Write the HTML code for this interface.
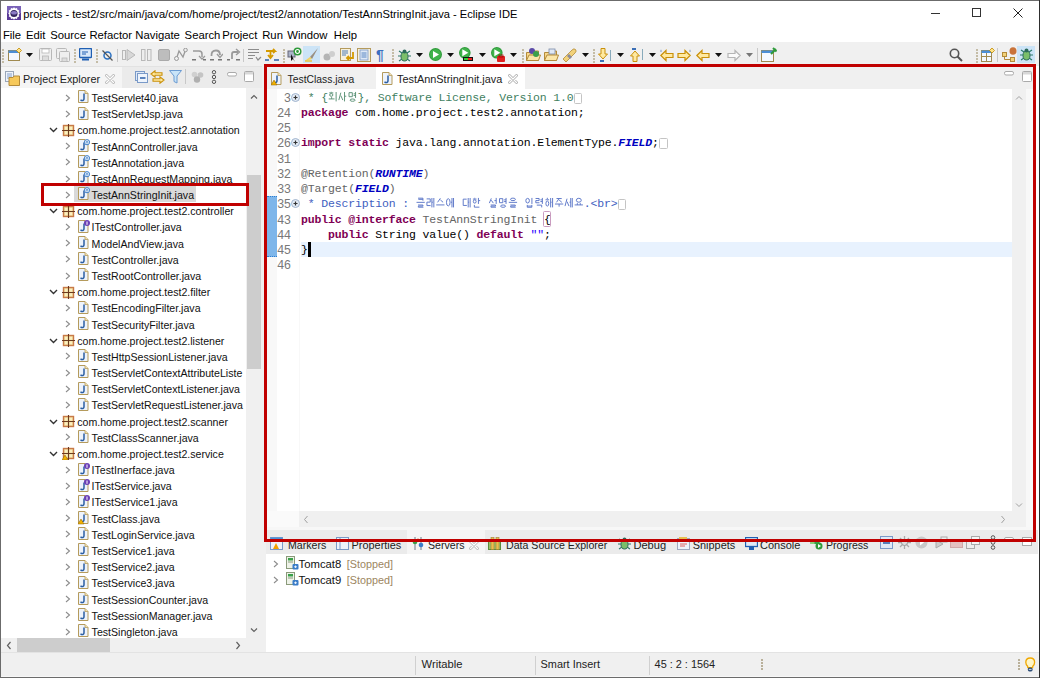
<!DOCTYPE html>
<html><head><meta charset="utf-8"><title>Eclipse IDE</title>
<style>
html,body{margin:0;padding:0;width:1040px;height:678px;overflow:hidden;background:#6b6b6b}
body>div{position:absolute}
.t{position:absolute;white-space:pre}
</style></head><body>
<div style="left:0;top:0;width:1040px;height:678px;background:#6b6b6b"></div>
<div style="left:1039px;top:0px;width:1px;height:678px;background:#2e2e2e;"></div>
<div style="left:1px;top:1px;width:1038px;height:676px;background:#ffffff;"></div>
<svg style="position:absolute;left:7px;top:6px" width="14" height="14" viewBox="0 0 14 14"><rect x="0" y="0" width="14" height="14" fill="#5b3a98"/><rect x="0" y="0" width="14" height="7" fill="#7a62b8"/><path d="M7 1.2 L8.2 2.6 L10 2 L10.4 3.8 L12.2 4.4 L11.6 6.2 L12.8 7.5 L11.6 8.8 L12.2 10.6 L10.4 11.2 L10 13 L8.2 12.4 L7 13.8 L5.8 12.4 L4 13 L3.6 11.2 L1.8 10.6 L2.4 8.8 L1.2 7.5 L2.4 6.2 L1.8 4.4 L3.6 3.8 L4 2 L5.8 2.6 Z" fill="#fff"/><circle cx="7" cy="7.5" r="3.6" fill="#35275f"/><ellipse cx="7" cy="6.8" rx="3" ry="1.8" fill="#8b7bc5"/></svg>
<div class="t" style="left:23.3px;top:4.00px;font-family:'Liberation Sans', sans-serif;font-size:11.15px;line-height:20px;color:#000;">projects - test2/src/main/java/com/home/project/test2/annotation/TestAnnStringInit.java - Eclipse IDE</div>
<div style="left:931px;top:12.5px;width:9px;height:1px;background:#333;"></div>
<div style="left:972px;top:8px;width:9px;height:9px;background:transparent;border:1px solid #333;box-sizing:border-box"></div>
<svg style="position:absolute;left:1013px;top:8px" width="10" height="10" viewBox="0 0 10 10"><path d="M0.5 0.5 L9.5 9.5 M9.5 0.5 L0.5 9.5" stroke="#222" stroke-width="1"/></svg>
<div class="t" style="left:2.9px;top:25.00px;font-family:'Liberation Sans', sans-serif;font-size:11.3px;line-height:20px;color:#000;">File</div>
<div class="t" style="left:25.900000000000002px;top:25.00px;font-family:'Liberation Sans', sans-serif;font-size:11.3px;line-height:20px;color:#000;">Edit</div>
<div class="t" style="left:50.2px;top:25.00px;font-family:'Liberation Sans', sans-serif;font-size:11.3px;line-height:20px;color:#000;">Source</div>
<div class="t" style="left:89.39999999999999px;top:25.00px;font-family:'Liberation Sans', sans-serif;font-size:11.3px;line-height:20px;color:#000;">Refactor</div>
<div class="t" style="left:135.29999999999998px;top:25.00px;font-family:'Liberation Sans', sans-serif;font-size:11.3px;line-height:20px;color:#000;">Navigate</div>
<div class="t" style="left:184.6px;top:25.00px;font-family:'Liberation Sans', sans-serif;font-size:11.3px;line-height:20px;color:#000;">Search</div>
<div class="t" style="left:222.2px;top:25.00px;font-family:'Liberation Sans', sans-serif;font-size:11.3px;line-height:20px;color:#000;">Project</div>
<div class="t" style="left:262.20000000000005px;top:25.00px;font-family:'Liberation Sans', sans-serif;font-size:11.3px;line-height:20px;color:#000;">Run</div>
<div class="t" style="left:287.3px;top:25.00px;font-family:'Liberation Sans', sans-serif;font-size:11.3px;line-height:20px;color:#000;">Window</div>
<div class="t" style="left:333.8px;top:25.00px;font-family:'Liberation Sans', sans-serif;font-size:11.3px;line-height:20px;color:#000;">Help</div>
<div style="left:1px;top:42px;width:1038px;height:24px;background:#f0f0f0;"></div>
<div style="left:1px;top:66px;width:263px;height:1px;background:#e2e2e2;"></div>
<svg style="position:absolute;left:2px;top:49px" width="2" height="14" viewBox="0 0 2 14"><rect x="0" y="0" width="2" height="2" fill="#c4bca6"/><rect x="0" y="3" width="2" height="2" fill="#c4bca6"/><rect x="0" y="6" width="2" height="2" fill="#c4bca6"/><rect x="0" y="9" width="2" height="2" fill="#c4bca6"/><rect x="0" y="12" width="2" height="2" fill="#c4bca6"/></svg>
<svg style="position:absolute;left:8px;top:48px" width="15" height="13" viewBox="0 0 15 13"><rect x="0.5" y="2.5" width="11" height="10" fill="#f5f9ff" stroke="#a08a50"/><rect x="0.5" y="2.5" width="11" height="2.5" fill="#4d8fd6"/><path d="M11 0 L13.5 2.5 L11 5 L8.5 2.5 Z" fill="#ffe38a" stroke="#c08a00" stroke-width="0.8"/></svg>
<svg style="position:absolute;left:26px;top:53px" width="7" height="4" viewBox="0 0 7 4"><path d="M0 0 H7 L3.5 4 Z" fill="#111"/></svg>
<svg style="position:absolute;left:39px;top:48px" width="13" height="13" viewBox="0 0 13 13"><rect x="0.5" y="0.5" width="12" height="12" rx="1" fill="#efefef" stroke="#b8b8b8"/><rect x="3" y="1" width="7" height="4" fill="#fff" stroke="#b8b8b8" stroke-width="0.8"/><rect x="3.5" y="8" width="6" height="4.5" fill="#ddd" stroke="#b8b8b8" stroke-width="0.8"/></svg>
<svg style="position:absolute;left:56px;top:48px" width="14" height="14" viewBox="0 0 14 14"><rect x="0.5" y="0.5" width="10" height="10" rx="1" fill="#efefef" stroke="#b8b8b8"/><rect x="3.5" y="3.5" width="10" height="10" rx="1" fill="#efefef" stroke="#b8b8b8"/><rect x="6" y="10" width="5" height="3.5" fill="#ddd" stroke="#b8b8b8" stroke-width="0.8"/></svg>
<svg style="position:absolute;left:74px;top:49px" width="2" height="14" viewBox="0 0 2 14"><rect x="0" y="0" width="2" height="2" fill="#c4bca6"/><rect x="0" y="3" width="2" height="2" fill="#c4bca6"/><rect x="0" y="6" width="2" height="2" fill="#c4bca6"/><rect x="0" y="9" width="2" height="2" fill="#c4bca6"/><rect x="0" y="12" width="2" height="2" fill="#c4bca6"/></svg>
<svg style="position:absolute;left:79px;top:48px" width="13" height="13" viewBox="0 0 13 13"><rect x="0.5" y="0.5" width="12" height="9" rx="1" fill="#d9e8fa" stroke="#1f5fb3" stroke-width="1.4"/><path d="M3 4 H9 M3 6 H7" stroke="#1f5fb3"/><rect x="3" y="10.5" width="7" height="2" fill="#1f5fb3"/></svg>
<svg style="position:absolute;left:96px;top:49px" width="2" height="14" viewBox="0 0 2 14"><rect x="0" y="0" width="2" height="2" fill="#c4bca6"/><rect x="0" y="3" width="2" height="2" fill="#c4bca6"/><rect x="0" y="6" width="2" height="2" fill="#c4bca6"/><rect x="0" y="9" width="2" height="2" fill="#c4bca6"/><rect x="0" y="12" width="2" height="2" fill="#c4bca6"/></svg>
<svg style="position:absolute;left:102px;top:50px" width="11" height="11" viewBox="0 0 11 11"><circle cx="5.5" cy="5.5" r="3.5" fill="none" stroke="#2a6fc0" stroke-width="1.5"/><path d="M0.5 0.5 L10.5 10.5" stroke="#555" stroke-width="1.2"/></svg>
<div style="left:117px;top:49px;width:1px;height:13px;background:#c8c8c8;"></div>
<svg style="position:absolute;left:122px;top:49px" width="14" height="12" viewBox="0 0 14 12"><rect x="0.5" y="1.5" width="3" height="9" fill="#eee" stroke="#b8b8b8"/><path d="M5 0.5 L13 6 L5 11.5 Z" fill="#d8d8d8" stroke="#b8b8b8"/></svg>
<svg style="position:absolute;left:141px;top:49px" width="11" height="12" viewBox="0 0 11 12"><rect x="0.5" y="0.5" width="3.5" height="11" fill="#eee" stroke="#b8b8b8"/><rect x="6.5" y="0.5" width="3.5" height="11" fill="#eee" stroke="#b8b8b8"/></svg>
<svg style="position:absolute;left:158px;top:49px" width="12" height="12" viewBox="0 0 12 12"><rect x="0.5" y="0.5" width="11" height="11" rx="1.5" fill="#bdbdbd" stroke="#aaa"/></svg>
<svg style="position:absolute;left:174px;top:48px" width="14" height="13" viewBox="0 0 14 13"><path d="M2.5 10.5 L5 3 L9 9 L11.5 2" fill="none" stroke="#999" stroke-width="1.3"/><circle cx="2.5" cy="10.5" r="2" fill="#eee" stroke="#999"/><circle cx="11.5" cy="2" r="1.8" fill="#eee" stroke="#999"/></svg>
<svg style="position:absolute;left:192px;top:48px" width="14" height="13" viewBox="0 0 14 13"><path d="M1 3 H7 Q10 3 10 6 V9" fill="none" stroke="#9a9a9a" stroke-width="1.5"/><path d="M7 8 L10 11 L13 8" fill="none" stroke="#9a9a9a" stroke-width="1.3"/><rect x="0" y="11" width="4" height="1.5" fill="#777"/><rect x="11" y="11" width="3" height="1.5" fill="#777"/></svg>
<svg style="position:absolute;left:209px;top:48px" width="14" height="13" viewBox="0 0 14 13"><path d="M2.5 8 Q2 2.5 7 2.5 Q11 2.5 11 7" fill="none" stroke="#9a9a9a" stroke-width="1.8"/><path d="M8 6 L11 9.5 L14 6" fill="none" stroke="#9a9a9a" stroke-width="1.4"/><rect x="1" y="11" width="4" height="1.5" fill="#777"/><rect x="9" y="11" width="4" height="1.5" fill="#777"/></svg>
<svg style="position:absolute;left:227px;top:48px" width="14" height="13" viewBox="0 0 14 13"><path d="M5 11 V6 Q5 4 7 4 H11" fill="none" stroke="#9a9a9a" stroke-width="1.8"/><path d="M9 1 L12.5 4 L9 7" fill="none" stroke="#9a9a9a" stroke-width="1.4"/><rect x="0" y="11" width="3" height="1.5" fill="#777"/><rect x="9" y="11" width="4" height="1.5" fill="#777"/></svg>
<div style="left:243px;top:49px;width:1px;height:13px;background:#c8c8c8;"></div>
<svg style="position:absolute;left:248px;top:48px" width="14" height="13" viewBox="0 0 14 13"><path d="M0 1.5 H11 M0 4.5 H11 M0 7.5 H7 M0 10.5 H5" stroke="#8c8c8c" stroke-width="1.2"/><path d="M8 9 L10 12 L13 9" fill="none" stroke="#8c8c8c" stroke-width="1.2"/></svg>
<svg style="position:absolute;left:265px;top:48px" width="15" height="13" viewBox="0 0 15 13"><path d="M1 3 H10 L8 1 M10 3 L8 5" fill="none" stroke="#d49a00" stroke-width="1.8"/><path d="M5.5 3 V9 M3 7 L5.5 10 L8 7" fill="none" stroke="#d49a00" stroke-width="1.8"/><path d="M0 12 H4 M9 12 H14" stroke="#2a5ea8" stroke-width="1.5"/></svg>
<svg style="position:absolute;left:283px;top:49px" width="2" height="14" viewBox="0 0 2 14"><rect x="0" y="0" width="2" height="2" fill="#c4bca6"/><rect x="0" y="3" width="2" height="2" fill="#c4bca6"/><rect x="0" y="6" width="2" height="2" fill="#c4bca6"/><rect x="0" y="9" width="2" height="2" fill="#c4bca6"/><rect x="0" y="12" width="2" height="2" fill="#c4bca6"/></svg>
<svg style="position:absolute;left:287px;top:47px" width="15" height="15" viewBox="0 0 15 15"><rect x="1" y="4" width="7" height="6" fill="#aab3c8" stroke="#667"/><path d="M4 7 L4 14 L6 12 L8 15 Z" fill="#111"/><circle cx="10.5" cy="4.5" r="4" fill="#2e9a3a"/><circle cx="10.5" cy="4.5" r="2" fill="none" stroke="#fff" stroke-width="1.2"/></svg>
<div style="left:303px;top:46px;width:17px;height:17px;background:#cce4f7;"></div>
<svg style="position:absolute;left:304px;top:47px" width="15" height="15" viewBox="0 0 15 15"><path d="M14 1 L6 10 L8 12 Z" fill="#9a8f82"/><path d="M6 10 L2 13 L1 14 L8 12 Z" fill="#f4d35e"/><path d="M1 14 H8" stroke="#e8c440" stroke-width="1.5"/></svg>
<svg style="position:absolute;left:323px;top:50px" width="13" height="11" viewBox="0 0 13 11"><circle cx="4" cy="7" r="3.5" fill="#b5b5b5"/><circle cx="9" cy="4" r="3" fill="#cfcfcf"/></svg>
<svg style="position:absolute;left:340px;top:48px" width="15" height="14" viewBox="0 0 15 14"><rect x="0.5" y="0.5" width="10" height="12" fill="#f6f0dc" stroke="#b59b5c"/><path d="M2 3 H8 M2 5 H8 M2 7 H6" stroke="#3b6fb6" stroke-width="0.9"/><path d="M13 4 V10 H7 M9 8 L7 10 L9 12" fill="none" stroke="#d49a00" stroke-width="1.8"/></svg>
<svg style="position:absolute;left:357px;top:48px" width="14" height="14" viewBox="0 0 14 14"><rect x="0.5" y="0.5" width="13" height="13" fill="#f6f0dc" stroke="#b59b5c"/><rect x="3" y="2" width="8" height="10" fill="#dde8f6" stroke="#7a9ac8" stroke-width="0.8"/><path d="M4.5 5 H9.5 M4.5 7 H9.5 M4.5 9 H9.5" stroke="#3b6fb6" stroke-width="0.8"/></svg>
<div class="t" style="left:376px;top:45.00px;font-family:'Liberation Sans', sans-serif;font-size:14px;line-height:20px;color:#3b6fc0;font-weight:bold">¶</div>
<svg style="position:absolute;left:392px;top:49px" width="2" height="14" viewBox="0 0 2 14"><rect x="0" y="0" width="2" height="2" fill="#c4bca6"/><rect x="0" y="3" width="2" height="2" fill="#c4bca6"/><rect x="0" y="6" width="2" height="2" fill="#c4bca6"/><rect x="0" y="9" width="2" height="2" fill="#c4bca6"/><rect x="0" y="12" width="2" height="2" fill="#c4bca6"/></svg>
<svg style="position:absolute;left:397px;top:48px" width="15" height="15" viewBox="0 0 15 15"><path d="M2 3 L5 5 M13 3 L10 5 M1 8 H4 M14 8 H11 M2 13 L5 11 M13 13 L10 11" stroke="#2c7a6a" stroke-width="1.2"/><ellipse cx="7.5" cy="8.5" rx="3.5" ry="4.5" fill="#7bbf6a" stroke="#2c6a5a"/><circle cx="7.5" cy="3.5" r="2" fill="#2c6a5a"/></svg>
<svg style="position:absolute;left:416px;top:53px" width="7" height="4" viewBox="0 0 7 4"><path d="M0 0 H7 L3.5 4 Z" fill="#111"/></svg>
<svg style="position:absolute;left:429px;top:48px" width="14" height="14" viewBox="0 0 14 14"><circle cx="6.5" cy="6.5" r="6.5" fill="#2e9a3a"/><circle cx="6.5" cy="6.5" r="5.5" fill="#3fb24a"/><path d="M4.0 3.0 L10.0 6.5 L4.0 10.0 Z" fill="#fff"/></svg>
<svg style="position:absolute;left:447px;top:53px" width="7" height="4" viewBox="0 0 7 4"><path d="M0 0 H7 L3.5 4 Z" fill="#111"/></svg>
<svg style="position:absolute;left:459px;top:47px" width="15" height="16" viewBox="0 0 15 16"><circle cx="5.8" cy="5.8" r="5.8" fill="#2e9a3a"/><circle cx="5.8" cy="5.8" r="4.8" fill="#3fb24a"/><path d="M3.3 2.3 L9.3 5.8 L3.3 9.3 Z" fill="#fff"/><rect x="4" y="10" width="10" height="4" fill="#111"/><rect x="5" y="11" width="4" height="2" fill="#3c3"/><rect x="9" y="11" width="4" height="2" fill="#e22"/></svg>
<svg style="position:absolute;left:479px;top:53px" width="7" height="4" viewBox="0 0 7 4"><path d="M0 0 H7 L3.5 4 Z" fill="#111"/></svg>
<svg style="position:absolute;left:491px;top:47px" width="15" height="16" viewBox="0 0 15 16"><circle cx="5.8" cy="5.8" r="5.8" fill="#2e9a3a"/><circle cx="5.8" cy="5.8" r="4.8" fill="#3fb24a"/><path d="M3.3 2.3 L9.3 5.8 L3.3 9.3 Z" fill="#fff"/><rect x="6" y="9" width="8" height="6" rx="1" fill="#e02020"/><rect x="8" y="8" width="4" height="2" fill="none" stroke="#a00" stroke-width="0.8"/></svg>
<svg style="position:absolute;left:510px;top:53px" width="7" height="4" viewBox="0 0 7 4"><path d="M0 0 H7 L3.5 4 Z" fill="#111"/></svg>
<svg style="position:absolute;left:522px;top:49px" width="2" height="14" viewBox="0 0 2 14"><rect x="0" y="0" width="2" height="2" fill="#c4bca6"/><rect x="0" y="3" width="2" height="2" fill="#c4bca6"/><rect x="0" y="6" width="2" height="2" fill="#c4bca6"/><rect x="0" y="9" width="2" height="2" fill="#c4bca6"/><rect x="0" y="12" width="2" height="2" fill="#c4bca6"/></svg>
<svg style="position:absolute;left:526px;top:48px" width="15" height="14" viewBox="0 0 15 14"><path d="M0.5 4.5 H5 L6 3 H12.5 V12.5 H0.5 Z" fill="#f6d68a" stroke="#b38a3a"/><path d="M0.5 12.5 L3 7 H14.5 L12.5 12.5 Z" fill="#fbe6a8" stroke="#b38a3a"/><circle cx="6" cy="3" r="3" fill="#5b4aa8"/><circle cx="10" cy="6" r="3" fill="#3aa04a"/></svg>
<svg style="position:absolute;left:544px;top:48px" width="15" height="14" viewBox="0 0 15 14"><path d="M0.5 4.5 H5 L6 3 H12.5 V12.5 H0.5 Z" fill="#f6d68a" stroke="#b38a3a"/><path d="M0.5 12.5 L3 7 H14.5 L12.5 12.5 Z" fill="#fbe6a8" stroke="#b38a3a"/><rect x="5" y="1" width="6" height="5" fill="#dfe8f5" stroke="#7a8aa8" stroke-width="0.8"/></svg>
<svg style="position:absolute;left:562px;top:48px" width="15" height="14" viewBox="0 0 15 14"><path d="M3 13 L1 11 L10 2 Q12 0 13.5 1.5 Q15 3 13 5 L4 14 Z" fill="#f2d27a" stroke="#b38a3a" stroke-width="0.8"/><path d="M5 8 L8 11 L10 9 L7 6 Z" fill="#8a8a9a"/></svg>
<svg style="position:absolute;left:582px;top:53px" width="7" height="4" viewBox="0 0 7 4"><path d="M0 0 H7 L3.5 4 Z" fill="#111"/></svg>
<svg style="position:absolute;left:593px;top:49px" width="2" height="14" viewBox="0 0 2 14"><rect x="0" y="0" width="2" height="2" fill="#c4bca6"/><rect x="0" y="3" width="2" height="2" fill="#c4bca6"/><rect x="0" y="6" width="2" height="2" fill="#c4bca6"/><rect x="0" y="9" width="2" height="2" fill="#c4bca6"/><rect x="0" y="12" width="2" height="2" fill="#c4bca6"/></svg>
<svg style="position:absolute;left:598px;top:48px" width="14" height="14" viewBox="0 0 14 14"><path d="M3 0.5 H7 V6 H9.5 L5 11 L0.5 6 H3 Z" fill="#ffe9a0" stroke="#c9900a"/><path d="M12.5 2 V13" stroke="#8ab" stroke-width="1"/><rect x="2" y="12" width="4" height="2" fill="#3b6fb6"/></svg>
<svg style="position:absolute;left:617px;top:53px" width="7" height="4" viewBox="0 0 7 4"><path d="M0 0 H7 L3.5 4 Z" fill="#111"/></svg>
<svg style="position:absolute;left:630px;top:48px" width="14" height="14" viewBox="0 0 14 14"><path d="M3 13.5 H7 V8 H9.5 L5 3 L0.5 8 H3 Z" fill="#ffe9a0" stroke="#c9900a"/><path d="M12.5 1 V12" stroke="#8ab" stroke-width="1"/><rect x="2" y="0" width="4" height="2" fill="#3b6fb6"/></svg>
<svg style="position:absolute;left:649px;top:53px" width="7" height="4" viewBox="0 0 7 4"><path d="M0 0 H7 L3.5 4 Z" fill="#111"/></svg>
<svg style="position:absolute;left:660px;top:49px" width="14" height="13" viewBox="0 0 14 13"><path d="M0.8 6.5 L6 1.5 V4.5 H13 V8.5 H6 V11.5 Z" fill="#ffe9a0" stroke="#c9900a" stroke-width="1.2"/><path d="M1 0.5 L2 2.5 L0 2.5 Z M1 3 L2 1 L0 1 Z" fill="#2a5ea8"/></svg>
<svg style="position:absolute;left:677px;top:49px" width="14" height="13" viewBox="0 0 14 13"><g transform="translate(14,0) scale(-1,1)"><path d="M0.8 6.5 L6 1.5 V4.5 H13 V8.5 H6 V11.5 Z" fill="#ffe9a0" stroke="#c9900a" stroke-width="1.2"/></g><path d="M13 0.5 L14 2.5 L12 2.5 Z M13 3 L14 1 L12 1 Z" fill="#2a5ea8"/></svg>
<svg style="position:absolute;left:696px;top:49px" width="14" height="13" viewBox="0 0 14 13"><path d="M0.8 6.5 L6 1.5 V4.5 H13 V8.5 H6 V11.5 Z" fill="#ffe9a0" stroke="#c9900a" stroke-width="1.2"/></svg>
<svg style="position:absolute;left:715px;top:53px" width="7" height="4" viewBox="0 0 7 4"><path d="M0 0 H7 L3.5 4 Z" fill="#111"/></svg>
<svg style="position:absolute;left:727px;top:49px" width="14" height="13" viewBox="0 0 14 13"><g transform="translate(14,0) scale(-1,1)"><path d="M0.8 6.5 L6 1.5 V4.5 H13 V8.5 H6 V11.5 Z" fill="#fafafa" stroke="#b5b5b5" stroke-width="1.2"/></g></svg>
<svg style="position:absolute;left:746px;top:53px" width="7" height="4" viewBox="0 0 7 4"><path d="M0 0 H7 L3.5 4 Z" fill="#777"/></svg>
<div style="left:757px;top:48px;width:1px;height:14px;background:#c8c8c8;"></div>
<svg style="position:absolute;left:761px;top:47px" width="16" height="15" viewBox="0 0 16 15"><rect x="0.5" y="3.5" width="12" height="11" fill="#f5f9ff" stroke="#a08a50"/><rect x="0.5" y="3.5" width="12" height="2.5" fill="#4d8fd6"/><path d="M10 7 L15 2 M12 1 L15.5 4.5" stroke="#2e9a3a" stroke-width="2"/></svg>
<svg style="position:absolute;left:949px;top:48px" width="14" height="15" viewBox="0 0 14 15"><circle cx="5.5" cy="5.5" r="4.2" fill="none" stroke="#555" stroke-width="1.6"/><path d="M8.5 8.5 L13 13" stroke="#555" stroke-width="2"/></svg>
<svg style="position:absolute;left:976px;top:49px" width="2" height="14" viewBox="0 0 2 14"><rect x="0" y="0" width="2" height="2" fill="#c4bca6"/><rect x="0" y="3" width="2" height="2" fill="#c4bca6"/><rect x="0" y="6" width="2" height="2" fill="#c4bca6"/><rect x="0" y="9" width="2" height="2" fill="#c4bca6"/><rect x="0" y="12" width="2" height="2" fill="#c4bca6"/></svg>
<svg style="position:absolute;left:981px;top:48px" width="14" height="14" viewBox="0 0 14 14"><rect x="0.5" y="2.5" width="10" height="11" fill="#f5f9ff" stroke="#a08a50"/><rect x="0.5" y="2.5" width="10" height="2.5" fill="#4d8fd6"/><path d="M0.5 8.5 H10.5 M5.5 5 V13.5" stroke="#a08a50"/><path d="M11 0 L13.5 2.5 L11 5 L8.5 2.5 Z" fill="#ffe38a" stroke="#c08a00" stroke-width="0.8"/></svg>
<div style="left:997px;top:48px;width:1px;height:14px;background:#c8c8c8;"></div>
<svg style="position:absolute;left:1002px;top:47px" width="15" height="15" viewBox="0 0 15 15"><rect x="0.5" y="5.5" width="4" height="4" fill="#f2d27a" stroke="#b38a3a"/><rect x="8.5" y="10.5" width="4" height="4" fill="#f2d27a" stroke="#b38a3a"/><path d="M2.5 9.5 V12.5 H8.5" stroke="#b38a3a" fill="none"/><ellipse cx="11" cy="4" rx="3.5" ry="3.8" fill="#c9733a"/></svg>
<div style="left:1017px;top:46px;width:18px;height:17px;background:#cce4f7;"></div>
<svg style="position:absolute;left:1019px;top:47px" width="15" height="15" viewBox="0 0 15 15"><path d="M2 3 L5 5 M13 3 L10 5 M1 8 H4 M14 8 H11 M2 13 L5 11 M13 13 L10 11" stroke="#2c7a6a" stroke-width="1.2"/><ellipse cx="7.5" cy="8.5" rx="3.5" ry="4.5" fill="#7bbf6a" stroke="#2c6a5a"/><circle cx="7.5" cy="3.5" r="2" fill="#2c6a5a"/></svg>
<div style="left:1px;top:67px;width:261px;height:21px;background:#ebebeb;"></div>
<div style="left:1px;top:67px;width:121px;height:21px;background:#f5f5f5;"></div>
<svg style="position:absolute;left:5px;top:71px" width="15" height="15" viewBox="0 0 15 15"><rect x="0.5" y="0.5" width="8" height="10" fill="#eef3fb" stroke="#9aa6b8"/><path d="M2 3 H7 M2 5 H7 M2 7 H6" stroke="#6a8ac0" stroke-width="0.8"/><path d="M4 6.5 H8 L9 5 H14.5 V14.5 H4 Z" fill="#f6c85a" stroke="#b38a3a"/></svg>
<div class="t" style="left:22.9px;top:69.00px;font-family:'Liberation Sans', sans-serif;font-size:10.85px;line-height:20px;color:#222;">Project Explorer</div>
<svg style="position:absolute;left:105px;top:74px" width="10" height="10" viewBox="0 0 10 10"><path d="M1.5 1.5 L8.5 8.5 M8.5 1.5 L1.5 8.5" stroke="#b8b8b8" stroke-width="2.8" stroke-linecap="round"/><path d="M1.5 1.5 L8.5 8.5 M8.5 1.5 L1.5 8.5" stroke="#fff" stroke-width="1.1" stroke-linecap="round"/></svg>
<svg style="position:absolute;left:135px;top:71px" width="13" height="12" viewBox="0 0 13 12"><rect x="0.5" y="0.5" width="9" height="9" fill="#dfe9f7" stroke="#7a9ac8"/><rect x="2.5" y="2.5" width="10" height="9" fill="#eef4fc" stroke="#7a9ac8"/><path d="M5 7 H10.5" stroke="#2a5ea8" stroke-width="1.5"/></svg>
<svg style="position:absolute;left:150px;top:70px" width="15" height="14" viewBox="0 0 15 14"><path d="M1 4 L5 0.8 V2.8 H12 V5.2 H5 V7.2 Z" fill="#ffe9a0" stroke="#c9900a" stroke-width="1.1"/><path d="M14 10 L10 13.2 V11.2 H3 V8.8 H10 V6.8 Z" fill="#ffe9a0" stroke="#c9900a" stroke-width="1.1"/></svg>
<svg style="position:absolute;left:169px;top:70px" width="13" height="14" viewBox="0 0 13 14"><path d="M0.5 0.5 H12.5 L8 6 V13 L5 11.5 V6 Z" fill="#c9e4f8" stroke="#6b9bd2"/></svg>
<div style="left:185px;top:69px;width:1px;height:15px;background:#c8c8c8;"></div>
<svg style="position:absolute;left:191px;top:71px" width="13" height="12" viewBox="0 0 13 12"><circle cx="3.5" cy="3.5" r="2.8" fill="#d0d0d0"/><circle cx="9.5" cy="4" r="2.8" fill="#c4c4c4"/><circle cx="6" cy="8.5" r="3.2" fill="#b0b0b0"/></svg>
<svg style="position:absolute;left:211px;top:70px" width="6" height="14" viewBox="0 0 6 14"><circle cx="3" cy="2.2" r="1.7" fill="none" stroke="#555" stroke-width="1"/><circle cx="3" cy="7" r="1.7" fill="none" stroke="#555" stroke-width="1"/><circle cx="3" cy="11.8" r="1.7" fill="none" stroke="#555" stroke-width="1"/></svg>
<svg style="position:absolute;left:227px;top:72px" width="10" height="5" viewBox="0 0 10 5"><rect x="0.5" y="0.5" width="9" height="3.5" rx="1.5" fill="#fff" stroke="#aaa"/></svg>
<svg style="position:absolute;left:244px;top:71px" width="10" height="11" viewBox="0 0 10 11"><rect x="0.5" y="0.5" width="9" height="10" rx="1" fill="#fff" stroke="#aaa"/><rect x="1" y="1" width="8" height="2.5" fill="#d8d8d8"/></svg>
<div style="left:1px;top:88px;width:245px;height:550px;background:#ffffff;"></div>
<div style="left:246px;top:88px;width:16px;height:550px;background:#f0f0f0;"></div>
<div style="left:246.5px;top:175px;width:14.5px;height:194px;background:#cdcdcd;"></div>
<svg style="position:absolute;left:250px;top:94px" width="8" height="6" viewBox="0 0 8 6"><path d="M1 4.5 L4 1.5 L7 4.5" fill="none" stroke="#606060" stroke-width="1.2"/></svg>
<svg style="position:absolute;left:250px;top:627px" width="8" height="6" viewBox="0 0 8 6"><path d="M1 1.5 L4 4.5 L7 1.5" fill="none" stroke="#606060" stroke-width="1.2"/></svg>
<div style="left:1px;top:638px;width:261px;height:15px;background:#f0f0f0;"></div>
<div style="left:17px;top:638px;width:93px;height:14px;background:#cdcdcd;"></div>
<svg style="position:absolute;left:6px;top:641px" width="6" height="9" viewBox="0 0 6 9"><path d="M4.5 1 L1.5 4.5 L4.5 8" fill="none" stroke="#606060" stroke-width="1.2"/></svg>
<svg style="position:absolute;left:235px;top:641px" width="6" height="9" viewBox="0 0 6 9"><path d="M1.5 1 L4.5 4.5 L1.5 8" fill="none" stroke="#606060" stroke-width="1.2"/></svg>
<div style="left:74px;top:186px;width:122px;height:16px;background:#d9d9d9;"></div>
<svg style="position:absolute;left:64.8px;top:93.6px" width="6" height="8" viewBox="0 0 6 8"><path d="M1 1 L4.5 4 L1 7" fill="none" stroke="#8c8c8c" stroke-width="1.1"/></svg>
<svg style="position:absolute;left:77.6px;top:90.39999999999999px" width="12" height="14" viewBox="0 0 12 14"><path d="M0.5 0.5 H7 L10 3.5 V12.5 H0.5 Z" fill="#eef3fb" stroke="#b59b5c" stroke-width="1"/><path d="M7 0.5 V3.5 H10" fill="#f4e3b0" stroke="#b59b5c" stroke-width="0.8"/><path d="M6 3.5 V8.5 Q6 11 3.5 10.5 L2.5 10" fill="none" stroke="#2b5ea3" stroke-width="1.5"/></svg>
<div class="t" style="left:91.6px;top:88.00px;font-family:'Liberation Sans', sans-serif;font-size:10.6px;line-height:20px;color:#111;">TestServlet40.java</div>
<svg style="position:absolute;left:64.8px;top:109.78px" width="6" height="8" viewBox="0 0 6 8"><path d="M1 1 L4.5 4 L1 7" fill="none" stroke="#8c8c8c" stroke-width="1.1"/></svg>
<svg style="position:absolute;left:77.6px;top:106.58px" width="12" height="14" viewBox="0 0 12 14"><path d="M0.5 0.5 H7 L10 3.5 V12.5 H0.5 Z" fill="#eef3fb" stroke="#b59b5c" stroke-width="1"/><path d="M7 0.5 V3.5 H10" fill="#f4e3b0" stroke="#b59b5c" stroke-width="0.8"/><path d="M6 3.5 V8.5 Q6 11 3.5 10.5 L2.5 10" fill="none" stroke="#2b5ea3" stroke-width="1.5"/></svg>
<div class="t" style="left:91.6px;top:104.00px;font-family:'Liberation Sans', sans-serif;font-size:10.6px;line-height:20px;color:#111;">TestServletJsp.java</div>
<svg style="position:absolute;left:49px;top:127.45999999999998px" width="9" height="6" viewBox="0 0 9 6"><path d="M1 1 L4.5 4.5 L8 1" fill="none" stroke="#333" stroke-width="1.4"/></svg>
<svg style="position:absolute;left:61.8px;top:123.75999999999998px" width="13" height="13" viewBox="0 0 13 13"><rect x="1.5" y="1.5" width="10" height="10" fill="#f3dfa0" stroke="#c87a48" stroke-width="1.4"/><rect x="3" y="3" width="2.6" height="2.6" fill="#fbf0c0"/><rect x="7.4" y="3" width="2.6" height="2.6" fill="#fbf0c0"/><rect x="3" y="7.4" width="2.6" height="2.6" fill="#fbf0c0"/><rect x="7.4" y="7.4" width="2.6" height="2.6" fill="#fbf0c0"/><path d="M6.5 0 V13 M0 6.5 H13" stroke="#6b3a20" stroke-width="1.1"/></svg>
<div class="t" style="left:77.2px;top:120.00px;font-family:'Liberation Sans', sans-serif;font-size:10.6px;line-height:20px;color:#111;">com.home.project.test2.annotation</div>
<svg style="position:absolute;left:64.8px;top:142.14px" width="6" height="8" viewBox="0 0 6 8"><path d="M1 1 L4.5 4 L1 7" fill="none" stroke="#8c8c8c" stroke-width="1.1"/></svg>
<svg style="position:absolute;left:77.6px;top:138.94px" width="12" height="14" viewBox="0 0 12 14"><path d="M0.5 0.5 H7 L10 3.5 V12.5 H0.5 Z" fill="#eef3fb" stroke="#b59b5c" stroke-width="1"/><path d="M7 0.5 V3.5 H10" fill="#f4e3b0" stroke="#b59b5c" stroke-width="0.8"/><path d="M6 3.5 V8.5 Q6 11 3.5 10.5 L2.5 10" fill="none" stroke="#2b5ea3" stroke-width="1.5"/><circle cx="9" cy="3.2" r="2.6" fill="#fff" stroke="#3a7cc8" stroke-width="1"/><circle cx="9" cy="3.2" r="1" fill="none" stroke="#3a7cc8" stroke-width="0.8"/></svg>
<div class="t" style="left:91.6px;top:137.00px;font-family:'Liberation Sans', sans-serif;font-size:10.6px;line-height:20px;color:#111;">TestAnnController.java</div>
<svg style="position:absolute;left:64.8px;top:158.32px" width="6" height="8" viewBox="0 0 6 8"><path d="M1 1 L4.5 4 L1 7" fill="none" stroke="#8c8c8c" stroke-width="1.1"/></svg>
<svg style="position:absolute;left:77.6px;top:155.12px" width="12" height="14" viewBox="0 0 12 14"><path d="M0.5 0.5 H7 L10 3.5 V12.5 H0.5 Z" fill="#eef3fb" stroke="#b59b5c" stroke-width="1"/><path d="M7 0.5 V3.5 H10" fill="#f4e3b0" stroke="#b59b5c" stroke-width="0.8"/><path d="M6 3.5 V8.5 Q6 11 3.5 10.5 L2.5 10" fill="none" stroke="#2b5ea3" stroke-width="1.5"/><circle cx="9" cy="3.2" r="2.6" fill="#fff" stroke="#3a7cc8" stroke-width="1"/><circle cx="9" cy="3.2" r="1" fill="none" stroke="#3a7cc8" stroke-width="0.8"/></svg>
<div class="t" style="left:91.6px;top:153.00px;font-family:'Liberation Sans', sans-serif;font-size:10.6px;line-height:20px;color:#111;">TestAnnotation.java</div>
<svg style="position:absolute;left:64.8px;top:174.5px" width="6" height="8" viewBox="0 0 6 8"><path d="M1 1 L4.5 4 L1 7" fill="none" stroke="#8c8c8c" stroke-width="1.1"/></svg>
<svg style="position:absolute;left:77.6px;top:171.3px" width="12" height="14" viewBox="0 0 12 14"><path d="M0.5 0.5 H7 L10 3.5 V12.5 H0.5 Z" fill="#eef3fb" stroke="#b59b5c" stroke-width="1"/><path d="M7 0.5 V3.5 H10" fill="#f4e3b0" stroke="#b59b5c" stroke-width="0.8"/><path d="M6 3.5 V8.5 Q6 11 3.5 10.5 L2.5 10" fill="none" stroke="#2b5ea3" stroke-width="1.5"/><circle cx="9" cy="3.2" r="2.6" fill="#fff" stroke="#3a7cc8" stroke-width="1"/><circle cx="9" cy="3.2" r="1" fill="none" stroke="#3a7cc8" stroke-width="0.8"/></svg>
<div class="t" style="left:91.6px;top:169.00px;font-family:'Liberation Sans', sans-serif;font-size:10.6px;line-height:20px;color:#111;">TestAnnRequestMapping.java</div>
<svg style="position:absolute;left:64.8px;top:190.68px" width="6" height="8" viewBox="0 0 6 8"><path d="M1 1 L4.5 4 L1 7" fill="none" stroke="#8c8c8c" stroke-width="1.1"/></svg>
<svg style="position:absolute;left:77.6px;top:187.48000000000002px" width="12" height="14" viewBox="0 0 12 14"><path d="M0.5 0.5 H7 L10 3.5 V12.5 H0.5 Z" fill="#eef3fb" stroke="#b59b5c" stroke-width="1"/><path d="M7 0.5 V3.5 H10" fill="#f4e3b0" stroke="#b59b5c" stroke-width="0.8"/><path d="M6 3.5 V8.5 Q6 11 3.5 10.5 L2.5 10" fill="none" stroke="#2b5ea3" stroke-width="1.5"/><circle cx="9" cy="3.2" r="2.6" fill="#fff" stroke="#3a7cc8" stroke-width="1"/><circle cx="9" cy="3.2" r="1" fill="none" stroke="#3a7cc8" stroke-width="0.8"/></svg>
<div class="t" style="left:91.6px;top:185.00px;font-family:'Liberation Sans', sans-serif;font-size:10.6px;line-height:20px;color:#111;">TestAnnStringInit.java</div>
<svg style="position:absolute;left:49px;top:208.35999999999999px" width="9" height="6" viewBox="0 0 9 6"><path d="M1 1 L4.5 4.5 L8 1" fill="none" stroke="#333" stroke-width="1.4"/></svg>
<svg style="position:absolute;left:61.8px;top:204.66px" width="13" height="13" viewBox="0 0 13 13"><rect x="1.5" y="1.5" width="10" height="10" fill="#f3dfa0" stroke="#c87a48" stroke-width="1.4"/><rect x="3" y="3" width="2.6" height="2.6" fill="#fbf0c0"/><rect x="7.4" y="3" width="2.6" height="2.6" fill="#fbf0c0"/><rect x="3" y="7.4" width="2.6" height="2.6" fill="#fbf0c0"/><rect x="7.4" y="7.4" width="2.6" height="2.6" fill="#fbf0c0"/><path d="M6.5 0 V13 M0 6.5 H13" stroke="#6b3a20" stroke-width="1.1"/></svg>
<div class="t" style="left:77.2px;top:201.00px;font-family:'Liberation Sans', sans-serif;font-size:10.6px;line-height:20px;color:#111;">com.home.project.test2.controller</div>
<svg style="position:absolute;left:64.8px;top:223.04px" width="6" height="8" viewBox="0 0 6 8"><path d="M1 1 L4.5 4 L1 7" fill="none" stroke="#8c8c8c" stroke-width="1.1"/></svg>
<svg style="position:absolute;left:77.6px;top:219.84px" width="12" height="14" viewBox="0 0 12 14"><path d="M0.5 0.5 H7 L10 3.5 V12.5 H0.5 Z" fill="#eef3fb" stroke="#b59b5c" stroke-width="1"/><path d="M7 0.5 V3.5 H10" fill="#f4e3b0" stroke="#b59b5c" stroke-width="0.8"/><path d="M6 3.5 V8.5 Q6 11 3.5 10.5 L2.5 10" fill="none" stroke="#2b5ea3" stroke-width="1.5"/><circle cx="9" cy="3" r="3" fill="#6a3fb5"/><path d="M9 1.5 V4.8" stroke="#fff" stroke-width="1"/></svg>
<div class="t" style="left:91.6px;top:217.00px;font-family:'Liberation Sans', sans-serif;font-size:10.6px;line-height:20px;color:#111;">ITestController.java</div>
<svg style="position:absolute;left:64.8px;top:239.22px" width="6" height="8" viewBox="0 0 6 8"><path d="M1 1 L4.5 4 L1 7" fill="none" stroke="#8c8c8c" stroke-width="1.1"/></svg>
<svg style="position:absolute;left:77.6px;top:236.02px" width="12" height="14" viewBox="0 0 12 14"><path d="M0.5 0.5 H7 L10 3.5 V12.5 H0.5 Z" fill="#eef3fb" stroke="#b59b5c" stroke-width="1"/><path d="M7 0.5 V3.5 H10" fill="#f4e3b0" stroke="#b59b5c" stroke-width="0.8"/><path d="M6 3.5 V8.5 Q6 11 3.5 10.5 L2.5 10" fill="none" stroke="#2b5ea3" stroke-width="1.5"/></svg>
<div class="t" style="left:91.6px;top:234.00px;font-family:'Liberation Sans', sans-serif;font-size:10.6px;line-height:20px;color:#111;">ModelAndView.java</div>
<svg style="position:absolute;left:64.8px;top:255.39999999999998px" width="6" height="8" viewBox="0 0 6 8"><path d="M1 1 L4.5 4 L1 7" fill="none" stroke="#8c8c8c" stroke-width="1.1"/></svg>
<svg style="position:absolute;left:77.6px;top:252.2px" width="12" height="14" viewBox="0 0 12 14"><path d="M0.5 0.5 H7 L10 3.5 V12.5 H0.5 Z" fill="#eef3fb" stroke="#b59b5c" stroke-width="1"/><path d="M7 0.5 V3.5 H10" fill="#f4e3b0" stroke="#b59b5c" stroke-width="0.8"/><path d="M6 3.5 V8.5 Q6 11 3.5 10.5 L2.5 10" fill="none" stroke="#2b5ea3" stroke-width="1.5"/></svg>
<div class="t" style="left:91.6px;top:250.00px;font-family:'Liberation Sans', sans-serif;font-size:10.6px;line-height:20px;color:#111;">TestController.java</div>
<svg style="position:absolute;left:64.8px;top:271.58px" width="6" height="8" viewBox="0 0 6 8"><path d="M1 1 L4.5 4 L1 7" fill="none" stroke="#8c8c8c" stroke-width="1.1"/></svg>
<svg style="position:absolute;left:77.6px;top:268.38px" width="12" height="14" viewBox="0 0 12 14"><path d="M0.5 0.5 H7 L10 3.5 V12.5 H0.5 Z" fill="#eef3fb" stroke="#b59b5c" stroke-width="1"/><path d="M7 0.5 V3.5 H10" fill="#f4e3b0" stroke="#b59b5c" stroke-width="0.8"/><path d="M6 3.5 V8.5 Q6 11 3.5 10.5 L2.5 10" fill="none" stroke="#2b5ea3" stroke-width="1.5"/></svg>
<div class="t" style="left:91.6px;top:266.00px;font-family:'Liberation Sans', sans-serif;font-size:10.6px;line-height:20px;color:#111;">TestRootController.java</div>
<svg style="position:absolute;left:49px;top:289.26px" width="9" height="6" viewBox="0 0 9 6"><path d="M1 1 L4.5 4.5 L8 1" fill="none" stroke="#333" stroke-width="1.4"/></svg>
<svg style="position:absolute;left:61.8px;top:285.56px" width="13" height="13" viewBox="0 0 13 13"><rect x="1.5" y="1.5" width="10" height="10" fill="#f3dfa0" stroke="#c87a48" stroke-width="1.4"/><rect x="3" y="3" width="2.6" height="2.6" fill="#fbf0c0"/><rect x="7.4" y="3" width="2.6" height="2.6" fill="#fbf0c0"/><rect x="3" y="7.4" width="2.6" height="2.6" fill="#fbf0c0"/><rect x="7.4" y="7.4" width="2.6" height="2.6" fill="#fbf0c0"/><path d="M6.5 0 V13 M0 6.5 H13" stroke="#6b3a20" stroke-width="1.1"/></svg>
<div class="t" style="left:77.2px;top:282.00px;font-family:'Liberation Sans', sans-serif;font-size:10.6px;line-height:20px;color:#111;">com.home.project.test2.filter</div>
<svg style="position:absolute;left:64.8px;top:303.94px" width="6" height="8" viewBox="0 0 6 8"><path d="M1 1 L4.5 4 L1 7" fill="none" stroke="#8c8c8c" stroke-width="1.1"/></svg>
<svg style="position:absolute;left:77.6px;top:300.74px" width="12" height="14" viewBox="0 0 12 14"><path d="M0.5 0.5 H7 L10 3.5 V12.5 H0.5 Z" fill="#eef3fb" stroke="#b59b5c" stroke-width="1"/><path d="M7 0.5 V3.5 H10" fill="#f4e3b0" stroke="#b59b5c" stroke-width="0.8"/><path d="M6 3.5 V8.5 Q6 11 3.5 10.5 L2.5 10" fill="none" stroke="#2b5ea3" stroke-width="1.5"/></svg>
<div class="t" style="left:91.6px;top:298.00px;font-family:'Liberation Sans', sans-serif;font-size:10.6px;line-height:20px;color:#111;">TestEncodingFilter.java</div>
<svg style="position:absolute;left:64.8px;top:320.12px" width="6" height="8" viewBox="0 0 6 8"><path d="M1 1 L4.5 4 L1 7" fill="none" stroke="#8c8c8c" stroke-width="1.1"/></svg>
<svg style="position:absolute;left:77.6px;top:316.92px" width="12" height="14" viewBox="0 0 12 14"><path d="M0.5 0.5 H7 L10 3.5 V12.5 H0.5 Z" fill="#eef3fb" stroke="#b59b5c" stroke-width="1"/><path d="M7 0.5 V3.5 H10" fill="#f4e3b0" stroke="#b59b5c" stroke-width="0.8"/><path d="M6 3.5 V8.5 Q6 11 3.5 10.5 L2.5 10" fill="none" stroke="#2b5ea3" stroke-width="1.5"/></svg>
<div class="t" style="left:91.6px;top:315.00px;font-family:'Liberation Sans', sans-serif;font-size:10.6px;line-height:20px;color:#111;">TestSecurityFilter.java</div>
<svg style="position:absolute;left:49px;top:337.79999999999995px" width="9" height="6" viewBox="0 0 9 6"><path d="M1 1 L4.5 4.5 L8 1" fill="none" stroke="#333" stroke-width="1.4"/></svg>
<svg style="position:absolute;left:61.8px;top:334.09999999999997px" width="13" height="13" viewBox="0 0 13 13"><rect x="1.5" y="1.5" width="10" height="10" fill="#f3dfa0" stroke="#c87a48" stroke-width="1.4"/><rect x="3" y="3" width="2.6" height="2.6" fill="#fbf0c0"/><rect x="7.4" y="3" width="2.6" height="2.6" fill="#fbf0c0"/><rect x="3" y="7.4" width="2.6" height="2.6" fill="#fbf0c0"/><rect x="7.4" y="7.4" width="2.6" height="2.6" fill="#fbf0c0"/><path d="M6.5 0 V13 M0 6.5 H13" stroke="#6b3a20" stroke-width="1.1"/></svg>
<div class="t" style="left:77.2px;top:331.00px;font-family:'Liberation Sans', sans-serif;font-size:10.6px;line-height:20px;color:#111;">com.home.project.test2.listener</div>
<svg style="position:absolute;left:64.8px;top:352.48px" width="6" height="8" viewBox="0 0 6 8"><path d="M1 1 L4.5 4 L1 7" fill="none" stroke="#8c8c8c" stroke-width="1.1"/></svg>
<svg style="position:absolute;left:77.6px;top:349.28000000000003px" width="12" height="14" viewBox="0 0 12 14"><path d="M0.5 0.5 H7 L10 3.5 V12.5 H0.5 Z" fill="#eef3fb" stroke="#b59b5c" stroke-width="1"/><path d="M7 0.5 V3.5 H10" fill="#f4e3b0" stroke="#b59b5c" stroke-width="0.8"/><path d="M6 3.5 V8.5 Q6 11 3.5 10.5 L2.5 10" fill="none" stroke="#2b5ea3" stroke-width="1.5"/></svg>
<div class="t" style="left:91.6px;top:347.00px;font-family:'Liberation Sans', sans-serif;font-size:10.6px;line-height:20px;color:#111;">TestHttpSessionListener.java</div>
<svg style="position:absolute;left:64.8px;top:368.65999999999997px" width="6" height="8" viewBox="0 0 6 8"><path d="M1 1 L4.5 4 L1 7" fill="none" stroke="#8c8c8c" stroke-width="1.1"/></svg>
<svg style="position:absolute;left:77.6px;top:365.46px" width="12" height="14" viewBox="0 0 12 14"><path d="M0.5 0.5 H7 L10 3.5 V12.5 H0.5 Z" fill="#eef3fb" stroke="#b59b5c" stroke-width="1"/><path d="M7 0.5 V3.5 H10" fill="#f4e3b0" stroke="#b59b5c" stroke-width="0.8"/><path d="M6 3.5 V8.5 Q6 11 3.5 10.5 L2.5 10" fill="none" stroke="#2b5ea3" stroke-width="1.5"/></svg>
<div class="t" style="left:91.6px;top:363.00px;font-family:'Liberation Sans', sans-serif;font-size:10.6px;line-height:20px;color:#111;">TestServletContextAttributeListe</div>
<svg style="position:absolute;left:64.8px;top:384.84000000000003px" width="6" height="8" viewBox="0 0 6 8"><path d="M1 1 L4.5 4 L1 7" fill="none" stroke="#8c8c8c" stroke-width="1.1"/></svg>
<svg style="position:absolute;left:77.6px;top:381.64000000000004px" width="12" height="14" viewBox="0 0 12 14"><path d="M0.5 0.5 H7 L10 3.5 V12.5 H0.5 Z" fill="#eef3fb" stroke="#b59b5c" stroke-width="1"/><path d="M7 0.5 V3.5 H10" fill="#f4e3b0" stroke="#b59b5c" stroke-width="0.8"/><path d="M6 3.5 V8.5 Q6 11 3.5 10.5 L2.5 10" fill="none" stroke="#2b5ea3" stroke-width="1.5"/></svg>
<div class="t" style="left:91.6px;top:379.00px;font-family:'Liberation Sans', sans-serif;font-size:10.6px;line-height:20px;color:#111;">TestServletContextListener.java</div>
<svg style="position:absolute;left:64.8px;top:401.02px" width="6" height="8" viewBox="0 0 6 8"><path d="M1 1 L4.5 4 L1 7" fill="none" stroke="#8c8c8c" stroke-width="1.1"/></svg>
<svg style="position:absolute;left:77.6px;top:397.82px" width="12" height="14" viewBox="0 0 12 14"><path d="M0.5 0.5 H7 L10 3.5 V12.5 H0.5 Z" fill="#eef3fb" stroke="#b59b5c" stroke-width="1"/><path d="M7 0.5 V3.5 H10" fill="#f4e3b0" stroke="#b59b5c" stroke-width="0.8"/><path d="M6 3.5 V8.5 Q6 11 3.5 10.5 L2.5 10" fill="none" stroke="#2b5ea3" stroke-width="1.5"/></svg>
<div class="t" style="left:91.6px;top:395.00px;font-family:'Liberation Sans', sans-serif;font-size:10.6px;line-height:20px;color:#111;">TestServletRequestListener.java</div>
<svg style="position:absolute;left:49px;top:418.70000000000005px" width="9" height="6" viewBox="0 0 9 6"><path d="M1 1 L4.5 4.5 L8 1" fill="none" stroke="#333" stroke-width="1.4"/></svg>
<svg style="position:absolute;left:61.8px;top:415.00000000000006px" width="13" height="13" viewBox="0 0 13 13"><rect x="1.5" y="1.5" width="10" height="10" fill="#f3dfa0" stroke="#c87a48" stroke-width="1.4"/><rect x="3" y="3" width="2.6" height="2.6" fill="#fbf0c0"/><rect x="7.4" y="3" width="2.6" height="2.6" fill="#fbf0c0"/><rect x="3" y="7.4" width="2.6" height="2.6" fill="#fbf0c0"/><rect x="7.4" y="7.4" width="2.6" height="2.6" fill="#fbf0c0"/><path d="M6.5 0 V13 M0 6.5 H13" stroke="#6b3a20" stroke-width="1.1"/></svg>
<div class="t" style="left:77.2px;top:412.00px;font-family:'Liberation Sans', sans-serif;font-size:10.6px;line-height:20px;color:#111;">com.home.project.test2.scanner</div>
<svg style="position:absolute;left:64.8px;top:433.38px" width="6" height="8" viewBox="0 0 6 8"><path d="M1 1 L4.5 4 L1 7" fill="none" stroke="#8c8c8c" stroke-width="1.1"/></svg>
<svg style="position:absolute;left:77.6px;top:430.18px" width="12" height="14" viewBox="0 0 12 14"><path d="M0.5 0.5 H7 L10 3.5 V12.5 H0.5 Z" fill="#eef3fb" stroke="#b59b5c" stroke-width="1"/><path d="M7 0.5 V3.5 H10" fill="#f4e3b0" stroke="#b59b5c" stroke-width="0.8"/><path d="M6 3.5 V8.5 Q6 11 3.5 10.5 L2.5 10" fill="none" stroke="#2b5ea3" stroke-width="1.5"/></svg>
<div class="t" style="left:91.6px;top:428.00px;font-family:'Liberation Sans', sans-serif;font-size:10.6px;line-height:20px;color:#111;">TestClassScanner.java</div>
<svg style="position:absolute;left:49px;top:451.05999999999995px" width="9" height="6" viewBox="0 0 9 6"><path d="M1 1 L4.5 4.5 L8 1" fill="none" stroke="#333" stroke-width="1.4"/></svg>
<svg style="position:absolute;left:61.8px;top:447.35999999999996px" width="13" height="13" viewBox="0 0 13 13"><rect x="1.5" y="1.5" width="10" height="10" fill="#f3dfa0" stroke="#c87a48" stroke-width="1.4"/><rect x="3" y="3" width="2.6" height="2.6" fill="#fbf0c0"/><rect x="7.4" y="3" width="2.6" height="2.6" fill="#fbf0c0"/><rect x="3" y="7.4" width="2.6" height="2.6" fill="#fbf0c0"/><rect x="7.4" y="7.4" width="2.6" height="2.6" fill="#fbf0c0"/><path d="M6.5 0 V13 M0 6.5 H13" stroke="#6b3a20" stroke-width="1.1"/><path d="M0 13 L3 8 L6 13 Z" fill="#f2b100" stroke="#8a6000" stroke-width="0.5"/></svg>
<div class="t" style="left:77.2px;top:444.00px;font-family:'Liberation Sans', sans-serif;font-size:10.6px;line-height:20px;color:#111;">com.home.project.test2.service</div>
<svg style="position:absolute;left:64.8px;top:465.74px" width="6" height="8" viewBox="0 0 6 8"><path d="M1 1 L4.5 4 L1 7" fill="none" stroke="#8c8c8c" stroke-width="1.1"/></svg>
<svg style="position:absolute;left:77.6px;top:462.54px" width="12" height="14" viewBox="0 0 12 14"><path d="M0.5 0.5 H7 L10 3.5 V12.5 H0.5 Z" fill="#eef3fb" stroke="#b59b5c" stroke-width="1"/><path d="M7 0.5 V3.5 H10" fill="#f4e3b0" stroke="#b59b5c" stroke-width="0.8"/><path d="M6 3.5 V8.5 Q6 11 3.5 10.5 L2.5 10" fill="none" stroke="#2b5ea3" stroke-width="1.5"/><circle cx="9" cy="3" r="3" fill="#6a3fb5"/><path d="M9 1.5 V4.8" stroke="#fff" stroke-width="1"/></svg>
<div class="t" style="left:91.6px;top:460.00px;font-family:'Liberation Sans', sans-serif;font-size:10.6px;line-height:20px;color:#111;">ITestInerface.java</div>
<svg style="position:absolute;left:64.8px;top:481.91999999999996px" width="6" height="8" viewBox="0 0 6 8"><path d="M1 1 L4.5 4 L1 7" fill="none" stroke="#8c8c8c" stroke-width="1.1"/></svg>
<svg style="position:absolute;left:77.6px;top:478.71999999999997px" width="12" height="14" viewBox="0 0 12 14"><path d="M0.5 0.5 H7 L10 3.5 V12.5 H0.5 Z" fill="#eef3fb" stroke="#b59b5c" stroke-width="1"/><path d="M7 0.5 V3.5 H10" fill="#f4e3b0" stroke="#b59b5c" stroke-width="0.8"/><path d="M6 3.5 V8.5 Q6 11 3.5 10.5 L2.5 10" fill="none" stroke="#2b5ea3" stroke-width="1.5"/><circle cx="9" cy="3" r="3" fill="#6a3fb5"/><path d="M9 1.5 V4.8" stroke="#fff" stroke-width="1"/></svg>
<div class="t" style="left:91.6px;top:476.00px;font-family:'Liberation Sans', sans-serif;font-size:10.6px;line-height:20px;color:#111;">ITestService.java</div>
<svg style="position:absolute;left:64.8px;top:498.1px" width="6" height="8" viewBox="0 0 6 8"><path d="M1 1 L4.5 4 L1 7" fill="none" stroke="#8c8c8c" stroke-width="1.1"/></svg>
<svg style="position:absolute;left:77.6px;top:494.90000000000003px" width="12" height="14" viewBox="0 0 12 14"><path d="M0.5 0.5 H7 L10 3.5 V12.5 H0.5 Z" fill="#eef3fb" stroke="#b59b5c" stroke-width="1"/><path d="M7 0.5 V3.5 H10" fill="#f4e3b0" stroke="#b59b5c" stroke-width="0.8"/><path d="M6 3.5 V8.5 Q6 11 3.5 10.5 L2.5 10" fill="none" stroke="#2b5ea3" stroke-width="1.5"/><circle cx="9" cy="3" r="3" fill="#6a3fb5"/><path d="M9 1.5 V4.8" stroke="#fff" stroke-width="1"/></svg>
<div class="t" style="left:91.6px;top:492.00px;font-family:'Liberation Sans', sans-serif;font-size:10.6px;line-height:20px;color:#111;">ITestService1.java</div>
<svg style="position:absolute;left:64.8px;top:514.28px" width="6" height="8" viewBox="0 0 6 8"><path d="M1 1 L4.5 4 L1 7" fill="none" stroke="#8c8c8c" stroke-width="1.1"/></svg>
<svg style="position:absolute;left:77.6px;top:511.08px" width="12" height="14" viewBox="0 0 12 14"><path d="M0.5 0.5 H7 L10 3.5 V12.5 H0.5 Z" fill="#eef3fb" stroke="#b59b5c" stroke-width="1"/><path d="M7 0.5 V3.5 H10" fill="#f4e3b0" stroke="#b59b5c" stroke-width="0.8"/><path d="M6 3.5 V8.5 Q6 11 3.5 10.5 L2.5 10" fill="none" stroke="#2b5ea3" stroke-width="1.5"/><path d="M0 13 L3 8 L6 13 Z" fill="#f2b100" stroke="#8a6000" stroke-width="0.5"/></svg>
<div class="t" style="left:91.6px;top:509.00px;font-family:'Liberation Sans', sans-serif;font-size:10.6px;line-height:20px;color:#111;">TestClass.java</div>
<svg style="position:absolute;left:64.8px;top:530.46px" width="6" height="8" viewBox="0 0 6 8"><path d="M1 1 L4.5 4 L1 7" fill="none" stroke="#8c8c8c" stroke-width="1.1"/></svg>
<svg style="position:absolute;left:77.6px;top:527.26px" width="12" height="14" viewBox="0 0 12 14"><path d="M0.5 0.5 H7 L10 3.5 V12.5 H0.5 Z" fill="#eef3fb" stroke="#b59b5c" stroke-width="1"/><path d="M7 0.5 V3.5 H10" fill="#f4e3b0" stroke="#b59b5c" stroke-width="0.8"/><path d="M6 3.5 V8.5 Q6 11 3.5 10.5 L2.5 10" fill="none" stroke="#2b5ea3" stroke-width="1.5"/></svg>
<div class="t" style="left:91.6px;top:525.00px;font-family:'Liberation Sans', sans-serif;font-size:10.6px;line-height:20px;color:#111;">TestLoginService.java</div>
<svg style="position:absolute;left:64.8px;top:546.64px" width="6" height="8" viewBox="0 0 6 8"><path d="M1 1 L4.5 4 L1 7" fill="none" stroke="#8c8c8c" stroke-width="1.1"/></svg>
<svg style="position:absolute;left:77.6px;top:543.4399999999999px" width="12" height="14" viewBox="0 0 12 14"><path d="M0.5 0.5 H7 L10 3.5 V12.5 H0.5 Z" fill="#eef3fb" stroke="#b59b5c" stroke-width="1"/><path d="M7 0.5 V3.5 H10" fill="#f4e3b0" stroke="#b59b5c" stroke-width="0.8"/><path d="M6 3.5 V8.5 Q6 11 3.5 10.5 L2.5 10" fill="none" stroke="#2b5ea3" stroke-width="1.5"/></svg>
<div class="t" style="left:91.6px;top:541.00px;font-family:'Liberation Sans', sans-serif;font-size:10.6px;line-height:20px;color:#111;">TestService1.java</div>
<svg style="position:absolute;left:64.8px;top:562.8199999999999px" width="6" height="8" viewBox="0 0 6 8"><path d="M1 1 L4.5 4 L1 7" fill="none" stroke="#8c8c8c" stroke-width="1.1"/></svg>
<svg style="position:absolute;left:77.6px;top:559.6199999999999px" width="12" height="14" viewBox="0 0 12 14"><path d="M0.5 0.5 H7 L10 3.5 V12.5 H0.5 Z" fill="#eef3fb" stroke="#b59b5c" stroke-width="1"/><path d="M7 0.5 V3.5 H10" fill="#f4e3b0" stroke="#b59b5c" stroke-width="0.8"/><path d="M6 3.5 V8.5 Q6 11 3.5 10.5 L2.5 10" fill="none" stroke="#2b5ea3" stroke-width="1.5"/></svg>
<div class="t" style="left:91.6px;top:557.00px;font-family:'Liberation Sans', sans-serif;font-size:10.6px;line-height:20px;color:#111;">TestService2.java</div>
<svg style="position:absolute;left:64.8px;top:579.0px" width="6" height="8" viewBox="0 0 6 8"><path d="M1 1 L4.5 4 L1 7" fill="none" stroke="#8c8c8c" stroke-width="1.1"/></svg>
<svg style="position:absolute;left:77.6px;top:575.8px" width="12" height="14" viewBox="0 0 12 14"><path d="M0.5 0.5 H7 L10 3.5 V12.5 H0.5 Z" fill="#eef3fb" stroke="#b59b5c" stroke-width="1"/><path d="M7 0.5 V3.5 H10" fill="#f4e3b0" stroke="#b59b5c" stroke-width="0.8"/><path d="M6 3.5 V8.5 Q6 11 3.5 10.5 L2.5 10" fill="none" stroke="#2b5ea3" stroke-width="1.5"/></svg>
<div class="t" style="left:91.6px;top:573.00px;font-family:'Liberation Sans', sans-serif;font-size:10.6px;line-height:20px;color:#111;">TestService3.java</div>
<svg style="position:absolute;left:64.8px;top:595.18px" width="6" height="8" viewBox="0 0 6 8"><path d="M1 1 L4.5 4 L1 7" fill="none" stroke="#8c8c8c" stroke-width="1.1"/></svg>
<svg style="position:absolute;left:77.6px;top:591.9799999999999px" width="12" height="14" viewBox="0 0 12 14"><path d="M0.5 0.5 H7 L10 3.5 V12.5 H0.5 Z" fill="#eef3fb" stroke="#b59b5c" stroke-width="1"/><path d="M7 0.5 V3.5 H10" fill="#f4e3b0" stroke="#b59b5c" stroke-width="0.8"/><path d="M6 3.5 V8.5 Q6 11 3.5 10.5 L2.5 10" fill="none" stroke="#2b5ea3" stroke-width="1.5"/></svg>
<div class="t" style="left:91.6px;top:590.00px;font-family:'Liberation Sans', sans-serif;font-size:10.6px;line-height:20px;color:#111;">TestSessionCounter.java</div>
<svg style="position:absolute;left:64.8px;top:611.36px" width="6" height="8" viewBox="0 0 6 8"><path d="M1 1 L4.5 4 L1 7" fill="none" stroke="#8c8c8c" stroke-width="1.1"/></svg>
<svg style="position:absolute;left:77.6px;top:608.16px" width="12" height="14" viewBox="0 0 12 14"><path d="M0.5 0.5 H7 L10 3.5 V12.5 H0.5 Z" fill="#eef3fb" stroke="#b59b5c" stroke-width="1"/><path d="M7 0.5 V3.5 H10" fill="#f4e3b0" stroke="#b59b5c" stroke-width="0.8"/><path d="M6 3.5 V8.5 Q6 11 3.5 10.5 L2.5 10" fill="none" stroke="#2b5ea3" stroke-width="1.5"/></svg>
<div class="t" style="left:91.6px;top:606.00px;font-family:'Liberation Sans', sans-serif;font-size:10.6px;line-height:20px;color:#111;">TestSessionManager.java</div>
<svg style="position:absolute;left:64.8px;top:627.54px" width="6" height="8" viewBox="0 0 6 8"><path d="M1 1 L4.5 4 L1 7" fill="none" stroke="#8c8c8c" stroke-width="1.1"/></svg>
<svg style="position:absolute;left:77.6px;top:624.3399999999999px" width="12" height="14" viewBox="0 0 12 14"><path d="M0.5 0.5 H7 L10 3.5 V12.5 H0.5 Z" fill="#eef3fb" stroke="#b59b5c" stroke-width="1"/><path d="M7 0.5 V3.5 H10" fill="#f4e3b0" stroke="#b59b5c" stroke-width="0.8"/><path d="M6 3.5 V8.5 Q6 11 3.5 10.5 L2.5 10" fill="none" stroke="#2b5ea3" stroke-width="1.5"/></svg>
<div class="t" style="left:91.6px;top:622.00px;font-family:'Liberation Sans', sans-serif;font-size:10.6px;line-height:20px;color:#111;">TestSingleton.java</div>
<div style="left:246px;top:88px;width:16px;height:87px;background:#f0f0f0;"></div>
<div style="left:246px;top:369px;width:16px;height:269px;background:#f0f0f0;"></div>
<svg style="position:absolute;left:250px;top:94px" width="8" height="6" viewBox="0 0 8 6"><path d="M1 4.5 L4 1.5 L7 4.5" fill="none" stroke="#606060" stroke-width="1.2"/></svg>
<svg style="position:absolute;left:250px;top:627px" width="8" height="6" viewBox="0 0 8 6"><path d="M1 1.5 L4 4.5 L7 1.5" fill="none" stroke="#606060" stroke-width="1.2"/></svg>
<div style="left:41px;top:183px;width:208px;height:23px;background:transparent;border:3px solid #c00000;box-sizing:border-box"></div>
<div style="left:262px;top:66px;width:4px;height:587px;background:#f0f0f0;"></div>
<div style="left:266px;top:64px;width:770px;height:477px;background:#ffffff;"></div>
<div style="left:267px;top:67px;width:766px;height:22px;background:#f0f0f0;"></div>
<div style="left:375.5px;top:67px;width:149.6px;height:22px;background:#ffffff;"></div>
<svg style="position:absolute;left:271px;top:71.5px" width="12" height="14" viewBox="0 0 12 14"><path d="M0.5 0.5 H7 L10 3.5 V12.5 H0.5 Z" fill="#eef3fb" stroke="#b59b5c" stroke-width="1"/><path d="M7 0.5 V3.5 H10" fill="#f4e3b0" stroke="#b59b5c" stroke-width="0.8"/><path d="M6 3.5 V8.5 Q6 11 3.5 10.5 L2.5 10" fill="none" stroke="#2b5ea3" stroke-width="1.5"/><path d="M0 13 L3 8 L6 13 Z" fill="#f2b100" stroke="#8a6000" stroke-width="0.5"/></svg>
<div class="t" style="left:287.6px;top:70.00px;font-family:'Liberation Sans', sans-serif;font-size:10.35px;line-height:20px;color:#222;">TestClass.java</div>
<svg style="position:absolute;left:381.5px;top:71.5px" width="12" height="14" viewBox="0 0 12 14"><path d="M0.5 0.5 H7 L10 3.5 V12.5 H0.5 Z" fill="#eef3fb" stroke="#b59b5c" stroke-width="1"/><path d="M7 0.5 V3.5 H10" fill="#f4e3b0" stroke="#b59b5c" stroke-width="0.8"/><path d="M6 3.5 V8.5 Q6 11 3.5 10.5 L2.5 10" fill="none" stroke="#2b5ea3" stroke-width="1.5"/></svg>
<div class="t" style="left:397px;top:69.00px;font-family:'Liberation Sans', sans-serif;font-size:10.9px;line-height:20px;color:#222;">TestAnnStringInit.java</div>
<svg style="position:absolute;left:508px;top:74px" width="10" height="10" viewBox="0 0 10 10"><path d="M1.5 1.5 L8.5 8.5 M8.5 1.5 L1.5 8.5" stroke="#b0b0b0" stroke-width="2.8" stroke-linecap="round"/><path d="M1.5 1.5 L8.5 8.5 M8.5 1.5 L1.5 8.5" stroke="#fff" stroke-width="1.1" stroke-linecap="round"/></svg>
<svg style="position:absolute;left:1004px;top:71px" width="10" height="5" viewBox="0 0 10 5"><rect x="0.5" y="0.5" width="9" height="3.5" rx="1.5" fill="#fff" stroke="#aaa"/></svg>
<svg style="position:absolute;left:1022px;top:71px" width="10" height="11" viewBox="0 0 10 11"><rect x="0.5" y="0.5" width="9" height="10" rx="1" fill="#fff" stroke="#aaa"/><rect x="1" y="1" width="8" height="2.5" fill="#d8d8d8"/></svg>
<div style="left:267px;top:89px;width:10px;height:422px;background:#f8f8f8;"></div>
<div style="left:299px;top:89px;width:1px;height:422px;background:#f8f8f8;"></div>
<div style="left:1012px;top:89px;width:14px;height:438px;background:#f0f0f0;"></div>
<div style="left:1026px;top:89px;width:7px;height:438px;background:#f8f8f8;"></div>
<div style="left:299px;top:511px;width:713px;height:16px;background:#f0f0f0;"></div>
<div style="left:267px;top:511px;width:32px;height:16px;background:#fafafa;"></div>
<svg style="position:absolute;left:1015px;top:95px" width="8" height="6" viewBox="0 0 8 6"><path d="M1 4.5 L4 1.5 L7 4.5" fill="none" stroke="#a0a0a0" stroke-width="1"/></svg>
<svg style="position:absolute;left:1015px;top:502px" width="8" height="6" viewBox="0 0 8 6"><path d="M1 1.5 L4 4.5 L7 1.5" fill="none" stroke="#a0a0a0" stroke-width="1"/></svg>
<svg style="position:absolute;left:303px;top:515px" width="6" height="9" viewBox="0 0 6 9"><path d="M4.5 1 L1.5 4.5 L4.5 8" fill="none" stroke="#a0a0a0" stroke-width="1"/></svg>
<svg style="position:absolute;left:1000px;top:515px" width="6" height="9" viewBox="0 0 6 9"><path d="M1.5 1 L4.5 4.5 L1.5 8" fill="none" stroke="#a0a0a0" stroke-width="1"/></svg>
<div style="left:267px;top:196px;width:10px;height:61px;background:#7eb6ea;border-top:1px dotted #2f7fd0;border-bottom:1px dotted #2f7fd0;box-sizing:border-box"></div>
<div style="left:301px;top:242px;width:711px;height:15.2px;background:#e8f2fe;"></div>
<div class="t" style="left:283.85px;top:89.00px;font-family:'Liberation Mono', monospace;font-size:12.2px;line-height:20px;color:#787878;letter-spacing:-0.570px">3</div>
<div class="t" style="left:277.1px;top:104.00px;font-family:'Liberation Mono', monospace;font-size:12.2px;line-height:20px;color:#787878;letter-spacing:-0.570px">24</div>
<div class="t" style="left:277.1px;top:119.00px;font-family:'Liberation Mono', monospace;font-size:12.2px;line-height:20px;color:#787878;letter-spacing:-0.570px">25</div>
<div class="t" style="left:277.1px;top:134.00px;font-family:'Liberation Mono', monospace;font-size:12.2px;line-height:20px;color:#787878;letter-spacing:-0.570px">26</div>
<div class="t" style="left:277.1px;top:150.00px;font-family:'Liberation Mono', monospace;font-size:12.2px;line-height:20px;color:#787878;letter-spacing:-0.570px">31</div>
<div class="t" style="left:277.1px;top:165.00px;font-family:'Liberation Mono', monospace;font-size:12.2px;line-height:20px;color:#787878;letter-spacing:-0.570px">32</div>
<div class="t" style="left:277.1px;top:180.00px;font-family:'Liberation Mono', monospace;font-size:12.2px;line-height:20px;color:#787878;letter-spacing:-0.570px">33</div>
<div class="t" style="left:277.1px;top:195.00px;font-family:'Liberation Mono', monospace;font-size:12.2px;line-height:20px;color:#787878;letter-spacing:-0.570px">35</div>
<div class="t" style="left:277.1px;top:211.00px;font-family:'Liberation Mono', monospace;font-size:12.2px;line-height:20px;color:#787878;letter-spacing:-0.570px">43</div>
<div class="t" style="left:277.1px;top:226.00px;font-family:'Liberation Mono', monospace;font-size:12.2px;line-height:20px;color:#787878;letter-spacing:-0.570px">44</div>
<div class="t" style="left:277.1px;top:241.00px;font-family:'Liberation Mono', monospace;font-size:12.2px;line-height:20px;color:#787878;letter-spacing:-0.570px">45</div>
<div class="t" style="left:277.1px;top:256.00px;font-family:'Liberation Mono', monospace;font-size:12.2px;line-height:20px;color:#787878;letter-spacing:-0.570px">46</div>
<svg style="position:absolute;left:290.5px;top:92.5px" width="9" height="9" viewBox="0 0 9 9"><circle cx="4.5" cy="4.5" r="4" fill="#e3ebf5" stroke="#9fb3cc" stroke-width="1"/><path d="M4.5 2.5 V6.5 M2.5 4.5 H6.5" stroke="#333" stroke-width="1.2"/></svg>
<svg style="position:absolute;left:290.5px;top:137.5px" width="9" height="9" viewBox="0 0 9 9"><circle cx="4.5" cy="4.5" r="4" fill="#e3ebf5" stroke="#9fb3cc" stroke-width="1"/><path d="M4.5 2.5 V6.5 M2.5 4.5 H6.5" stroke="#333" stroke-width="1.2"/></svg>
<svg style="position:absolute;left:290.5px;top:198.5px" width="9" height="9" viewBox="0 0 9 9"><circle cx="4.5" cy="4.5" r="4" fill="#e3ebf5" stroke="#9fb3cc" stroke-width="1"/><path d="M4.5 2.5 V6.5 M2.5 4.5 H6.5" stroke="#333" stroke-width="1.2"/></svg>
<div class="t" style="left:301.0px;top:88.00px;font-family:'Liberation Mono', monospace;font-size:11.5px;line-height:20px;color:#3f7f5f;;letter-spacing:-0.150px"> * {</div>
<svg style="position:absolute;left:0;top:0" width="1040" height="678"><g fill="none" stroke="#3f7f5f" stroke-width="0.95" opacity="0.85"><path d="M331.27 91.80 V92.49 M329.24 92.88 H333.29 M331.61 97.14 V98.91 M328.72 98.91 H334.50 M336.12 92.00 V101.40 M340.82 92.70 L338.83 100.09 M340.82 95.59 L342.80 100.09 M344.53 92.00 V101.40 M344.53 96.21 H346.28 M349.01 92.67 H352.32 V96.70 H349.01 Z M355.55 91.93 V97.95 M353.61 93.87 H355.55 M353.61 95.56 H355.55 "/><ellipse cx="331.27" cy="94.94" rx="1.60" ry="1.37"/><ellipse cx="352.60" cy="100.14" rx="2.48" ry="1.17"/></g></svg>
<div class="t" style="left:357.55px;top:88.00px;font-family:'Liberation Mono', monospace;font-size:11.5px;line-height:20px;color:#3f7f5f;;letter-spacing:-0.150px">}, Software License, Version 1.0</div>
<div style="left:573.9499999999999px;top:92.6px;width:8.4px;height:11.8px;background:transparent;border:1px solid #c4c4c4;border-radius:1.5px;box-sizing:border-box"></div>
<div class="t" style="left:301.0px;top:103.00px;font-family:'Liberation Mono', monospace;font-size:11.5px;line-height:20px;color:#7f0055;font-weight:bold;letter-spacing:-0.150px">package</div>
<div class="t" style="left:348.25px;top:103.00px;font-family:'Liberation Mono', monospace;font-size:11.5px;line-height:20px;color:#000;;letter-spacing:-0.150px"> com.home.project.test2.annotation;</div>
<div class="t" style="left:301.0px;top:133.00px;font-family:'Liberation Mono', monospace;font-size:11.5px;line-height:20px;color:#7f0055;font-weight:bold;letter-spacing:-0.150px">import</div>
<div class="t" style="left:348.25px;top:133.00px;font-family:'Liberation Mono', monospace;font-size:11.5px;line-height:20px;color:#7f0055;font-weight:bold;letter-spacing:-0.150px">static</div>
<div class="t" style="left:388.75px;top:133.00px;font-family:'Liberation Mono', monospace;font-size:11.5px;line-height:20px;color:#000;;letter-spacing:-0.150px"> java.lang.annotation.ElementType.</div>
<div class="t" style="left:618.25px;top:133.00px;font-family:'Liberation Mono', monospace;font-size:11.5px;line-height:20px;color:#0000c0;font-weight:bold;font-style:italic;letter-spacing:-0.150px">FIELD</div>
<div class="t" style="left:652.0px;top:133.00px;font-family:'Liberation Mono', monospace;font-size:11.5px;line-height:20px;color:#000;;letter-spacing:-0.150px">;</div>
<div style="left:659.15px;top:137.6px;width:8.4px;height:11.8px;background:transparent;border:1px solid #c4c4c4;border-radius:1.5px;box-sizing:border-box"></div>
<div class="t" style="left:301.0px;top:164.00px;font-family:'Liberation Mono', monospace;font-size:11.5px;line-height:20px;color:#646464;;letter-spacing:-0.150px">@Retention(</div>
<div class="t" style="left:375.25px;top:164.00px;font-family:'Liberation Mono', monospace;font-size:11.5px;line-height:20px;color:#0000c0;font-weight:bold;font-style:italic;letter-spacing:-0.150px">RUNTIME</div>
<div class="t" style="left:422.5px;top:164.00px;font-family:'Liberation Mono', monospace;font-size:11.5px;line-height:20px;color:#646464;;letter-spacing:-0.150px">)</div>
<div class="t" style="left:301.0px;top:179.00px;font-family:'Liberation Mono', monospace;font-size:11.5px;line-height:20px;color:#646464;;letter-spacing:-0.150px">@Target(</div>
<div class="t" style="left:355.0px;top:179.00px;font-family:'Liberation Mono', monospace;font-size:11.5px;line-height:20px;color:#0000c0;font-weight:bold;font-style:italic;letter-spacing:-0.150px">FIELD</div>
<div class="t" style="left:388.75px;top:179.00px;font-family:'Liberation Mono', monospace;font-size:11.5px;line-height:20px;color:#646464;;letter-spacing:-0.150px">)</div>
<div class="t" style="left:301.0px;top:194.00px;font-family:'Liberation Mono', monospace;font-size:11.5px;line-height:20px;color:#3f5fbf;;letter-spacing:-0.150px"> * Description : </div>
<svg style="position:absolute;left:0;top:0" width="1040" height="678"><g fill="none" stroke="#3f5fbf" stroke-width="0.95" opacity="0.85"><path d="M418.04 198.18 H422.94 V200.69 M418.36 199.37 H422.94 M416.52 202.35 H424.78 M418.04 205.02 H422.94 V206.08 H418.36 V207.19 H423.40 M426.67 198.88 H430.22 V202.13 H426.91 V205.55 H430.55 M431.90 198.00 V207.40 M431.90 202.21 H432.87 M433.83 198.00 V207.40 M440.35 198.29 L437.60 202.31 M440.35 199.86 L443.10 202.31 M436.22 204.91 H444.48 M451.98 198.00 V207.40 M450.82 202.21 H451.98 M453.53 198.00 V207.40 "/><ellipse cx="448.27" cy="202.31" rx="1.80" ry="3.61"/></g></svg>
<svg style="position:absolute;left:0;top:0" width="1040" height="678"><g fill="none" stroke="#3f5fbf" stroke-width="0.95" opacity="0.85"><path d="M466.66 199.15 H463.21 V205.46 H466.85 M468.20 198.00 V207.40 M468.20 202.21 H469.17 M470.13 198.00 V207.40 M474.72 197.80 V198.61 M472.92 199.07 H476.51 M478.43 197.93 V203.95 M478.43 200.62 H480.18 M474.36 204.91 V207.16 H479.40 "/><ellipse cx="474.72" cy="201.49" rx="1.42" ry="1.62"/></g></svg>
<svg style="position:absolute;left:0;top:0" width="1040" height="678"><g fill="none" stroke="#3f5fbf" stroke-width="0.95" opacity="0.85"><path d="M491.31 198.38 L489.33 203.11 M491.31 200.22 L493.30 203.11 M496.20 197.93 V203.95 M494.45 200.62 H496.20 M490.64 205.02 H495.54 V206.08 H490.96 V207.19 H496.00 M499.51 198.67 H502.82 V202.70 H499.51 Z M506.05 197.93 V203.95 M504.11 199.87 H506.05 M504.11 201.56 H506.05 M508.82 202.35 H517.08 M510.34 205.02 H515.24 V206.08 H510.66 V207.19 H515.70 "/><ellipse cx="503.10" cy="206.14" rx="2.48" ry="1.17"/><ellipse cx="512.95" cy="199.37" rx="2.48" ry="1.25"/></g></svg>
<svg style="position:absolute;left:0;top:0" width="1040" height="678"><g fill="none" stroke="#3f5fbf" stroke-width="0.95" opacity="0.85"><path d="M531.91 197.93 V203.95 M527.26 204.91 V207.25 H531.84 V204.91 M527.26 206.08 H531.84 M535.57 198.49 H539.12 V200.57 H535.81 V202.76 H539.45 M542.35 197.93 V203.95 M540.41 199.87 H542.35 M540.41 201.56 H542.35 M536.79 205.11 H541.69 V207.37 M547.32 197.80 V199.06 M545.52 199.78 H549.11 M550.65 198.00 V207.40 M550.65 202.21 H551.62 M552.58 198.00 V207.40 M556.49 198.54 H561.71 M559.10 198.54 L556.49 202.31 M559.10 200.01 L561.85 202.31 M554.97 204.02 H563.23 M559.10 204.02 V206.67 M567.01 198.70 L565.03 206.09 M567.01 201.59 L569.00 206.09 M570.73 198.00 V207.40 M569.57 202.21 H570.73 M572.28 198.00 V207.40 M577.34 203.14 V204.91 M580.26 203.14 V204.91 M574.67 204.91 H582.93 "/><ellipse cx="527.62" cy="200.69" rx="1.80" ry="2.31"/><ellipse cx="547.32" cy="203.57" rx="1.42" ry="2.52"/><ellipse cx="578.80" cy="200.25" rx="2.48" ry="1.96"/></g></svg>
<div class="t" style="left:583.75px;top:194.00px;font-family:'Liberation Mono', monospace;font-size:11.5px;line-height:20px;color:#3f5fbf;;letter-spacing:-0.150px">.&lt;br&gt;</div>
<div style="left:617.9px;top:198.6px;width:8.4px;height:11.8px;background:transparent;border:1px solid #c4c4c4;border-radius:1.5px;box-sizing:border-box"></div>
<div class="t" style="left:301.0px;top:210.00px;font-family:'Liberation Mono', monospace;font-size:11.5px;line-height:20px;color:#7f0055;font-weight:bold;letter-spacing:-0.150px">public</div>
<div class="t" style="left:348.25px;top:210.00px;font-family:'Liberation Mono', monospace;font-size:11.5px;line-height:20px;color:#7f0055;font-weight:bold;letter-spacing:-0.150px">@interface</div>
<div class="t" style="left:415.75px;top:210.00px;font-family:'Liberation Mono', monospace;font-size:11.5px;line-height:20px;color:#646464;;letter-spacing:-0.150px"> TestAnnStringInit </div>
<div class="t" style="left:544.0px;top:210.00px;font-family:'Liberation Mono', monospace;font-size:11.5px;line-height:20px;color:#000;;letter-spacing:-0.150px">{</div>
<div style="left:542.8px;top:211.4px;width:7.8px;height:15.2px;background:transparent;border:1px solid #c99bbf;border-radius:1.5px;box-sizing:border-box"></div>
<div class="t" style="left:328.0px;top:225.00px;font-family:'Liberation Mono', monospace;font-size:11.5px;line-height:20px;color:#7f0055;font-weight:bold;letter-spacing:-0.150px">public</div>
<div class="t" style="left:368.5px;top:225.00px;font-family:'Liberation Mono', monospace;font-size:11.5px;line-height:20px;color:#000;;letter-spacing:-0.150px"> String value() </div>
<div class="t" style="left:476.5px;top:225.00px;font-family:'Liberation Mono', monospace;font-size:11.5px;line-height:20px;color:#7f0055;font-weight:bold;letter-spacing:-0.150px">default</div>
<div class="t" style="left:530.5px;top:225.00px;font-family:'Liberation Mono', monospace;font-size:11.5px;line-height:20px;color:#2a00ff;;letter-spacing:-0.150px">""</div>
<div class="t" style="left:544.0px;top:225.00px;font-family:'Liberation Mono', monospace;font-size:11.5px;line-height:20px;color:#000;;letter-spacing:-0.150px">;</div>
<div class="t" style="left:301.0px;top:240.00px;font-family:'Liberation Mono', monospace;font-size:11.5px;line-height:20px;color:#000;;letter-spacing:-0.150px">}</div>
<div style="left:308.4px;top:242px;width:2.2px;height:14.8px;background:#000;"></div>
<div style="left:266px;top:527px;width:770px;height:3px;background:#f7f7f7;"></div>
<div style="left:266px;top:530px;width:772px;height:24px;background:#ebebeb;"></div>
<div style="left:406.5px;top:530px;width:78px;height:24px;background:#f5f5f5;"></div>
<div style="left:266px;top:554px;width:772px;height:99px;background:#ffffff;"></div>
<svg style="position:absolute;left:269.5px;top:537px" width="13" height="13" viewBox="0 0 13 13"><rect x="0.5" y="0.5" width="12" height="12" fill="#eef3fb" stroke="#7a9ac8"/><rect x="0.5" y="0.5" width="12" height="3" fill="#4d8fd6"/><path d="M3 12 L6 6 L9 12 Z" fill="#f2a000"/></svg>
<div class="t" style="left:288px;top:535.00px;font-family:'Liberation Sans', sans-serif;font-size:10.6px;line-height:20px;color:#222;">Markers</div>
<svg style="position:absolute;left:335.8px;top:537px" width="13" height="13" viewBox="0 0 13 13"><rect x="0.5" y="0.5" width="12" height="12" fill="#eef3fb" stroke="#7a9ac8"/><path d="M4 0.5 V12.5 M0.5 3 H12.5" stroke="#7a9ac8"/></svg>
<div class="t" style="left:351.6px;top:535.00px;font-family:'Liberation Sans', sans-serif;font-size:10.9px;line-height:20px;color:#222;">Properties</div>
<svg style="position:absolute;left:411.5px;top:537px" width="13" height="13" viewBox="0 0 13 13"><path d="M3 0 V13 M9 0 V13" stroke="#6a7a8a" stroke-width="1"/><circle cx="3" cy="5" r="2.3" fill="#3aa04a"/><circle cx="9" cy="8" r="2.3" fill="#3a7cc8"/><circle cx="6" cy="3" r="1.5" fill="#e06020"/></svg>
<div class="t" style="left:428px;top:535.00px;font-family:'Liberation Sans', sans-serif;font-size:10.6px;line-height:20px;color:#222;">Servers</div>
<svg style="position:absolute;left:469px;top:540px" width="10" height="10" viewBox="0 0 10 10"><path d="M1.5 1.5 L8.5 8.5 M8.5 1.5 L1.5 8.5" stroke="#b8b8b8" stroke-width="2.8" stroke-linecap="round"/><path d="M1.5 1.5 L8.5 8.5 M8.5 1.5 L1.5 8.5" stroke="#fff" stroke-width="1.1" stroke-linecap="round"/></svg>
<svg style="position:absolute;left:488px;top:537px" width="13" height="13" viewBox="0 0 13 13"><rect x="0.5" y="2.5" width="12" height="10" fill="#9ac06a" stroke="#5a8a3a"/><rect x="3" y="0.5" width="3" height="12" fill="#e8c050" stroke="#a08030" stroke-width="0.6"/><rect x="8" y="0.5" width="3" height="12" fill="#e8c050" stroke="#a08030" stroke-width="0.6"/></svg>
<div class="t" style="left:506px;top:535.00px;font-family:'Liberation Sans', sans-serif;font-size:10.6px;line-height:20px;color:#222;">Data Source Explorer</div>
<svg style="position:absolute;left:617px;top:536px" width="15" height="15" viewBox="0 0 15 15"><path d="M2 3 L5 5 M13 3 L10 5 M1 8 H4 M14 8 H11 M2 13 L5 11 M13 13 L10 11" stroke="#2c7a6a" stroke-width="1.2"/><ellipse cx="7.5" cy="8.5" rx="3.5" ry="4.5" fill="#7bbf6a" stroke="#2c6a5a"/><circle cx="7.5" cy="3.5" r="2" fill="#2c6a5a"/></svg>
<div class="t" style="left:633.4px;top:535.00px;font-family:'Liberation Sans', sans-serif;font-size:11.1px;line-height:20px;color:#222;">Debug</div>
<svg style="position:absolute;left:677px;top:537px" width="13" height="13" viewBox="0 0 13 13"><rect x="0.5" y="1.5" width="12" height="11" fill="#eef3fb" stroke="#a0a8c0"/><rect x="2" y="0" width="8" height="3" fill="#e8c050"/><path d="M3 7 H10 M3 9 H8" stroke="#e06060"/></svg>
<div class="t" style="left:692.8px;top:535.00px;font-family:'Liberation Sans', sans-serif;font-size:10.9px;line-height:20px;color:#222;">Snippets</div>
<svg style="position:absolute;left:745px;top:537px" width="13" height="13" viewBox="0 0 13 13"><rect x="0.5" y="0.5" width="12" height="9" fill="#dfe9f7" stroke="#1f5fb3" stroke-width="1.3"/><rect x="4" y="10" width="5" height="3" fill="#1f5fb3"/><path d="M3 4 H8" stroke="#1f5fb3"/></svg>
<div class="t" style="left:760px;top:535.00px;font-family:'Liberation Sans', sans-serif;font-size:11px;line-height:20px;color:#222;">Console</div>
<svg style="position:absolute;left:810px;top:537px" width="13" height="13" viewBox="0 0 13 13"><rect x="0.5" y="3" width="9" height="4" fill="#3aa04a"/><rect x="0.5" y="3" width="4" height="4" fill="#8ad07a"/><circle cx="9" cy="9" r="3.5" fill="#2e9a3a"/><path d="M8 7 L11 9 L8 11 Z" fill="#fff"/></svg>
<div class="t" style="left:826px;top:535.00px;font-family:'Liberation Sans', sans-serif;font-size:10.6px;line-height:20px;color:#222;">Progress</div>
<svg style="position:absolute;left:880px;top:536px" width="14" height="14" viewBox="0 0 14 14"><rect x="0.5" y="0.5" width="12" height="12" fill="#dfe9f7" stroke="#7a9ac8"/><path d="M3 7 H10" stroke="#2a5ea8" stroke-width="1.5"/></svg>
<svg style="position:absolute;left:898px;top:536px" width="13" height="13" viewBox="0 0 13 13"><path d="M6.5 0 V13 M0 6.5 H13 M2 2 L11 11 M11 2 L2 11" stroke="#aaa" stroke-width="1.3"/><circle cx="6.5" cy="6.5" r="3" fill="#ddd" stroke="#999"/></svg>
<svg style="position:absolute;left:915px;top:536px" width="13" height="13" viewBox="0 0 13 13"><circle cx="6.5" cy="6.5" r="6" fill="#c8c8c8"/><path d="M5 3.5 L9 6.5 L5 9.5 Z" fill="#fff"/></svg>
<svg style="position:absolute;left:935px;top:536px" width="13" height="13" viewBox="0 0 13 13"><path d="M1 12 L1 4 L8 8 Z" fill="#ccc" stroke="#aaa"/><rect x="6" y="1" width="6" height="5" fill="#eee" stroke="#aaa"/></svg>
<svg style="position:absolute;left:950px;top:537px" width="13" height="12" viewBox="0 0 13 12"><rect x="0.5" y="2.5" width="12" height="8" fill="#e4c0c0" stroke="#d0a8a8"/></svg>
<svg style="position:absolute;left:966px;top:536px" width="14" height="14" viewBox="0 0 14 14"><rect x="0.5" y="4.5" width="8" height="8" fill="#eee" stroke="#aaa"/><rect x="5.5" y="0.5" width="8" height="8" fill="#f5f5f5" stroke="#aaa"/></svg>
<svg style="position:absolute;left:990px;top:535px" width="6" height="15" viewBox="0 0 6 15"><circle cx="3" cy="2.5" r="1.8" fill="none" stroke="#555"/><circle cx="3" cy="7.5" r="1.8" fill="none" stroke="#555"/><circle cx="3" cy="12.5" r="1.8" fill="none" stroke="#555"/></svg>
<svg style="position:absolute;left:1004px;top:537px" width="10" height="5" viewBox="0 0 10 5"><rect x="0.5" y="0.5" width="9" height="3.5" rx="1.5" fill="#fff" stroke="#aaa"/></svg>
<svg style="position:absolute;left:1022px;top:537px" width="10" height="9" viewBox="0 0 10 9"><rect x="0.5" y="0.5" width="9" height="8" fill="#fff" stroke="#aaa"/></svg>
<div style="left:264px;top:64px;width:772px;height:478px;background:transparent;border:3px solid #c00000;box-sizing:border-box"></div>
<svg style="position:absolute;left:272.5px;top:559.7px" width="6" height="8" viewBox="0 0 6 8"><path d="M1 1 L4.5 4 L1 7" fill="none" stroke="#8c8c8c" stroke-width="1.1"/></svg>
<svg style="position:absolute;left:285.5px;top:556.2px" width="13" height="14" viewBox="0 0 13 14"><rect x="0.5" y="0.5" width="8" height="12" fill="#eef2e8" stroke="#8a9a7a"/><rect x="2" y="2" width="5" height="2.5" fill="#3aa04a"/><path d="M2 6 H7" stroke="#8a9a7a"/><rect x="6.5" y="8" width="6" height="5.5" rx="1" fill="#3a7cc8"/><path d="M9.5 9.5 V12 M8 10.8 H11" stroke="#fff" stroke-width="0.8"/></svg>
<div class="t" style="left:298.6px;top:554.00px;font-family:'Liberation Sans', sans-serif;font-size:11.3px;line-height:20px;color:#111;">Tomcat8</div>
<div class="t" style="left:346.8px;top:554.00px;font-family:'Liberation Sans', sans-serif;font-size:10.8px;line-height:20px;color:#9c8660;">[Stopped]</div>
<svg style="position:absolute;left:272.5px;top:575.7px" width="6" height="8" viewBox="0 0 6 8"><path d="M1 1 L4.5 4 L1 7" fill="none" stroke="#8c8c8c" stroke-width="1.1"/></svg>
<svg style="position:absolute;left:285.5px;top:572.2px" width="13" height="14" viewBox="0 0 13 14"><rect x="0.5" y="0.5" width="8" height="12" fill="#eef2e8" stroke="#8a9a7a"/><rect x="2" y="2" width="5" height="2.5" fill="#3aa04a"/><path d="M2 6 H7" stroke="#8a9a7a"/><rect x="6.5" y="8" width="6" height="5.5" rx="1" fill="#3a7cc8"/><path d="M9.5 9.5 V12 M8 10.8 H11" stroke="#fff" stroke-width="0.8"/></svg>
<div class="t" style="left:298.6px;top:570.00px;font-family:'Liberation Sans', sans-serif;font-size:11.3px;line-height:20px;color:#111;">Tomcat9</div>
<div class="t" style="left:346.8px;top:570.00px;font-family:'Liberation Sans', sans-serif;font-size:10.8px;line-height:20px;color:#9c8660;">[Stopped]</div>
<div style="left:1px;top:652px;width:1038px;height:1px;background:#e3e3e3;"></div>
<div style="left:1px;top:653px;width:1038px;height:24px;background:#f0f0f0;"></div>
<div style="left:1px;top:676px;width:1038px;height:1px;background:#f7f7f7;"></div>
<div style="left:415px;top:656px;width:1px;height:19px;background:#d0d0d0;"></div>
<div style="left:535px;top:656px;width:1px;height:19px;background:#d0d0d0;"></div>
<div style="left:649px;top:656px;width:1px;height:19px;background:#d0d0d0;"></div>
<div class="t" style="left:421.6px;top:654.00px;font-family:'Liberation Sans', sans-serif;font-size:11.2px;line-height:20px;color:#222;">Writable</div>
<div class="t" style="left:540.6px;top:654.00px;font-family:'Liberation Sans', sans-serif;font-size:10.9px;line-height:20px;color:#222;">Smart Insert</div>
<div class="t" style="left:654.6px;top:654.00px;font-family:'Liberation Sans', sans-serif;font-size:10.9px;line-height:20px;color:#222;">45 : 2 : 1564</div>
<svg style="position:absolute;left:761px;top:659px" width="2" height="13" viewBox="0 0 2 13"><rect x="0" y="0" width="2" height="2" fill="#b9b09a"/><rect x="0" y="3" width="2" height="2" fill="#b9b09a"/><rect x="0" y="6" width="2" height="2" fill="#b9b09a"/><rect x="0" y="9" width="2" height="2" fill="#b9b09a"/></svg>
<svg style="position:absolute;left:1018px;top:659px" width="2" height="13" viewBox="0 0 2 13"><rect x="0" y="0" width="2" height="2" fill="#b9b09a"/><rect x="0" y="3" width="2" height="2" fill="#b9b09a"/><rect x="0" y="6" width="2" height="2" fill="#b9b09a"/><rect x="0" y="9" width="2" height="2" fill="#b9b09a"/></svg>
<svg style="position:absolute;left:1025px;top:657px" width="11" height="16" viewBox="0 0 11 16"><path d="M2.6 9.2 Q0.8 7.6 0.8 5.2 Q0.8 1 5.2 1 Q9.6 1 9.6 5.2 Q9.6 7.6 7.8 9.2 L7.6 10.6 H2.8 Z" fill="#fff6c8" stroke="#f0a800" stroke-width="1.3"/><rect x="2.8" y="10.6" width="4.8" height="3.8" rx="1.6" fill="#2f4f78"/><path d="M3.8 12.4 H6.6" stroke="#dfe8f2" stroke-width="0.9"/></svg>
</body></html>
